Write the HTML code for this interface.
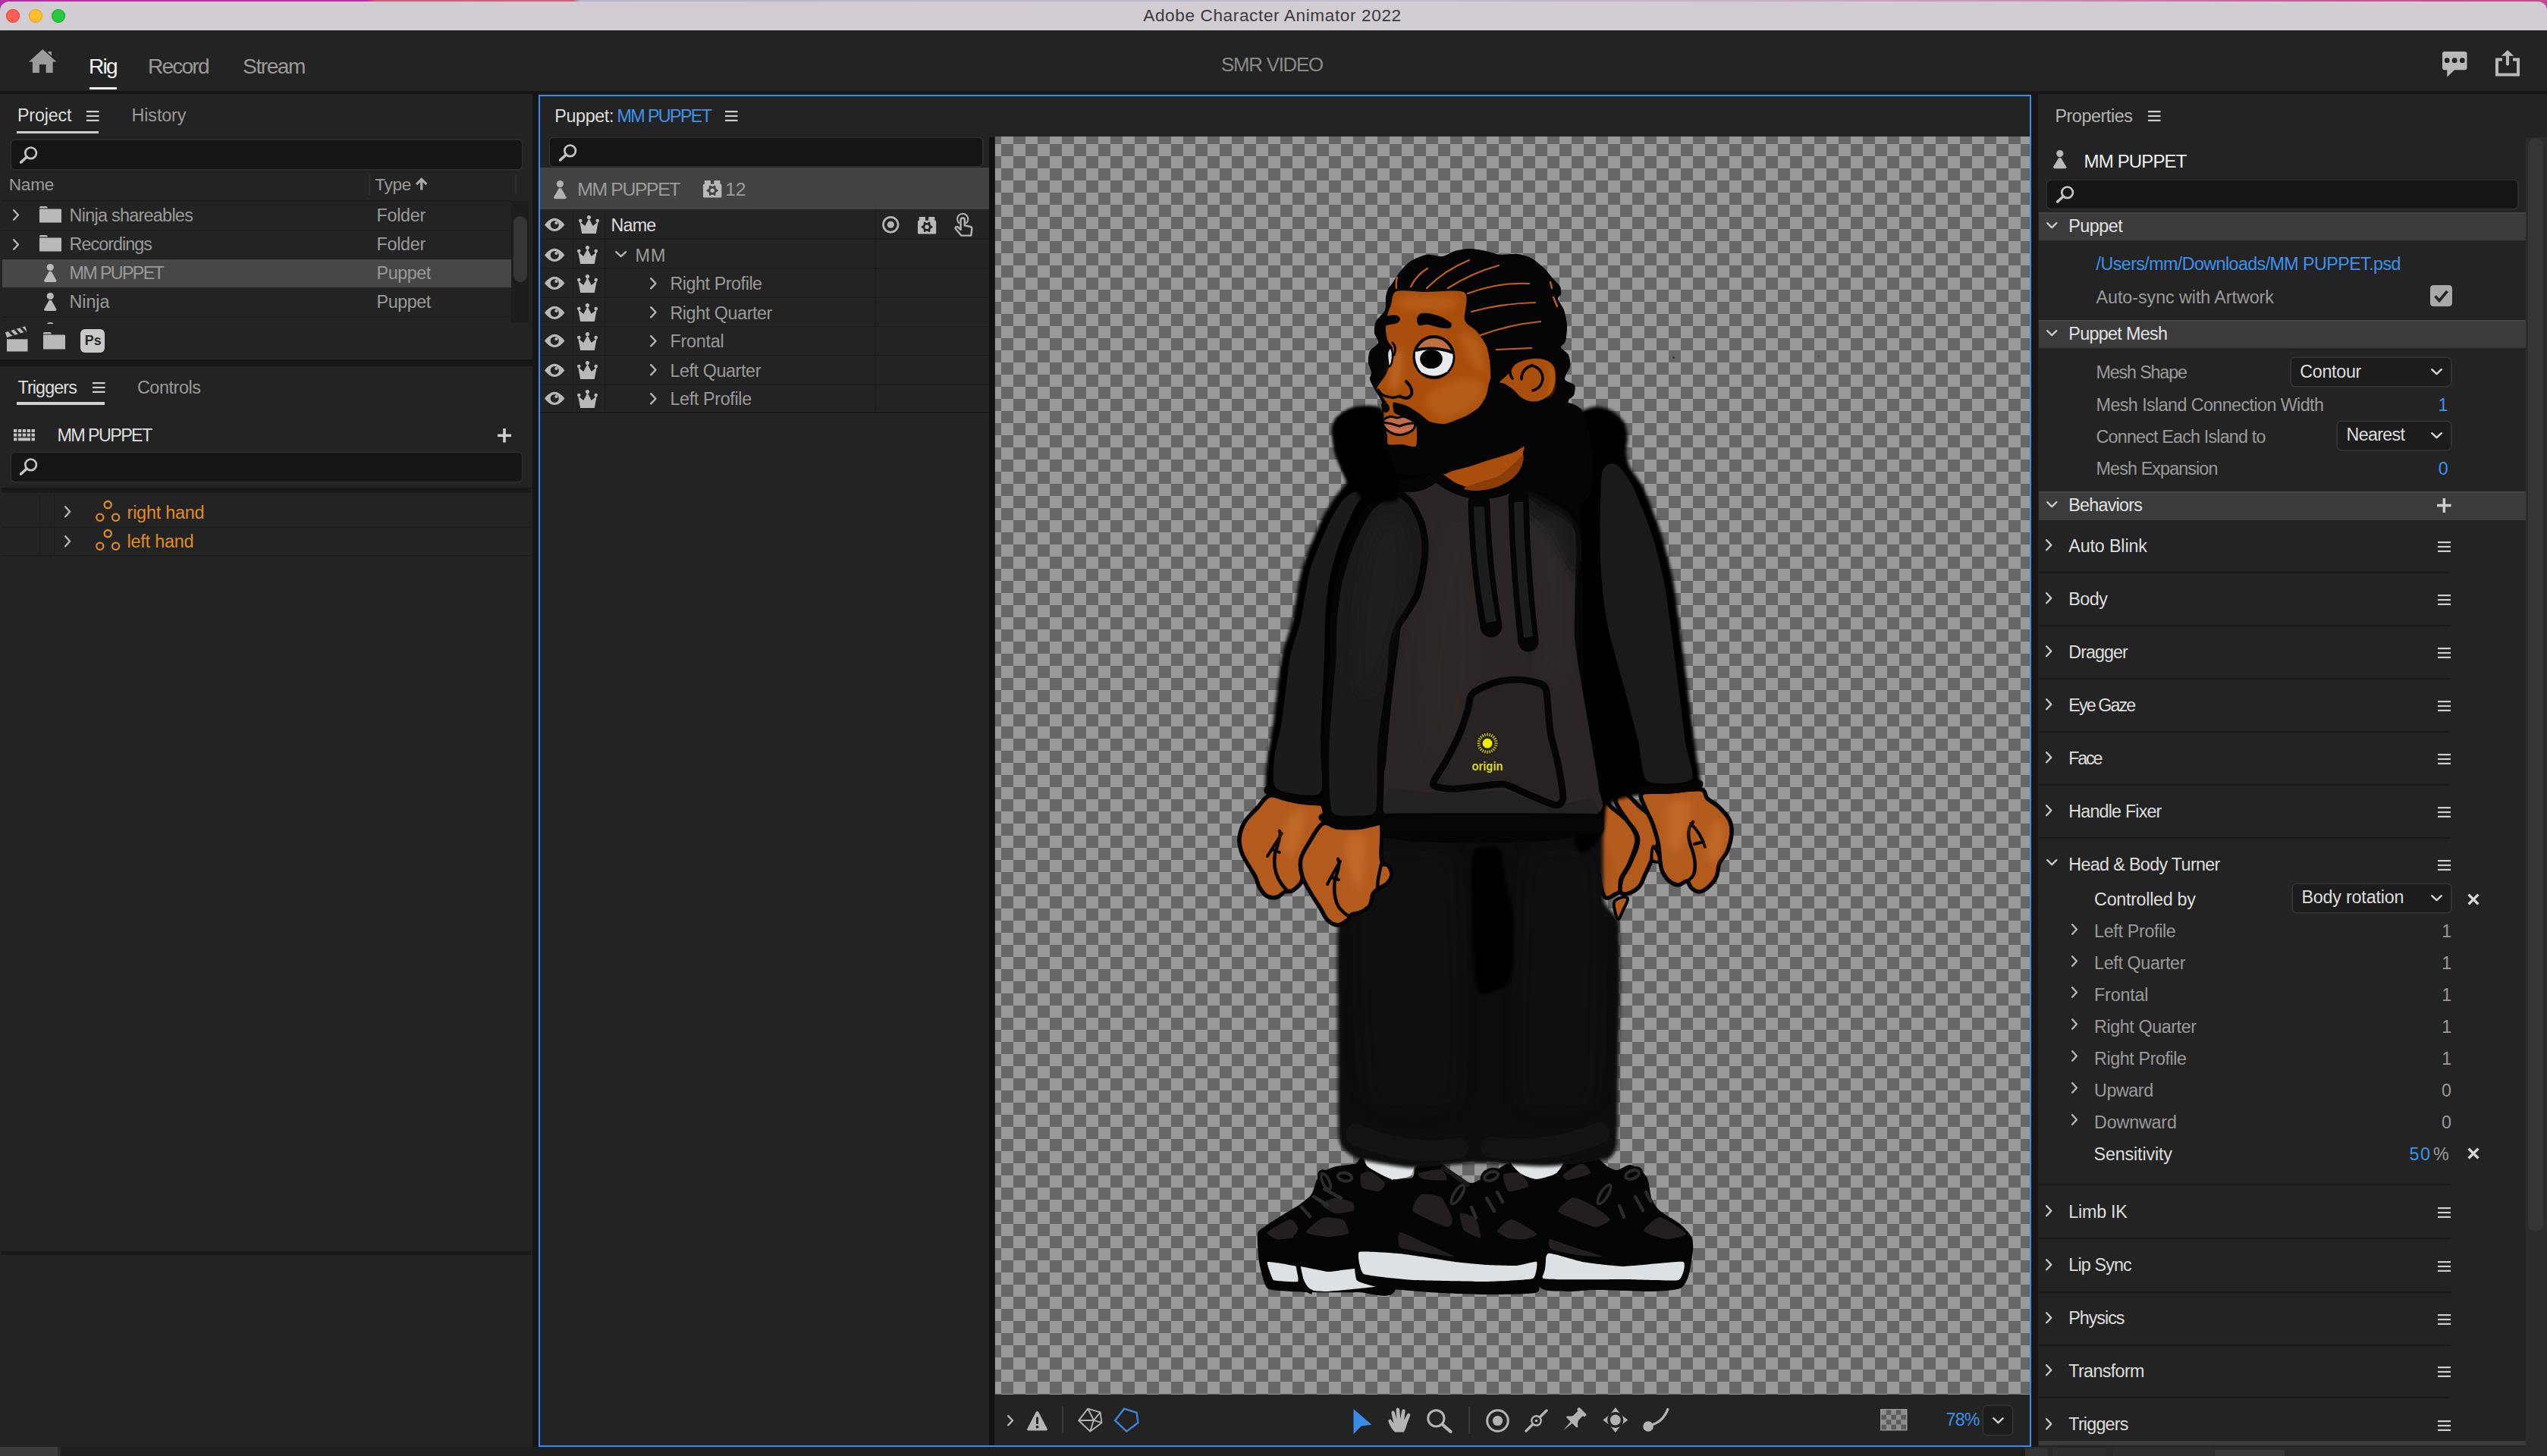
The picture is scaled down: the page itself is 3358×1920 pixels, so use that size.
<!DOCTYPE html><html><head><meta charset="utf-8"><title>Adobe Character Animator 2022</title><style>
html,body{margin:0;padding:0;background:#232323;overflow:hidden}
body{width:3358px;height:1920px;position:relative;font-family:"Liberation Sans", sans-serif;}
.t{position:absolute;white-space:nowrap;}
svg{overflow:visible}
</style></head><body>
<div style="position:absolute;left:0px;top:0px;width:3358px;height:16px;background:linear-gradient(90deg,#b030a0 0,#b432a2 14.4%,#c8607e 14.8%,#c86480 22.5%,#b6b6cc 22.8%,#c0bccc 55%,#c8b0c4 70%,#c890b4 80%,#c0609a 90%,#bc4c8c 100%);"></div>
<div style="position:absolute;left:0px;top:2px;width:3358px;height:38px;background:#d2cdd2;border-radius:12px 12px 0 0;"></div>
<div style="position:absolute;left:8px;top:12px;width:18px;height:18px;background:#fe5f57;border-radius:50%;box-shadow:inset 0 0 0 1px #e2463f;"></div>
<div style="position:absolute;left:37.8px;top:12px;width:18px;height:18px;background:#febc2e;border-radius:50%;box-shadow:inset 0 0 0 1px #dfa023;"></div>
<div style="position:absolute;left:68px;top:12px;width:18px;height:18px;background:#28c840;border-radius:50%;box-shadow:inset 0 0 0 1px #1aab29;"></div>
<div style="position:absolute;left:0px;top:40px;width:3358px;height:80px;background:#232323;"></div>
<div style="position:absolute;left:0px;top:119.5px;width:3358px;height:4.5px;background:#161616;"></div>
<svg style="position:absolute;left:37.5px;top:65px;" width="36.5" height="31" viewBox="0 0 36.5 31"><path d="M18.2 0 L36.5 16.5 L31.6 16.5 L31.6 31 L22.6 31 L22.6 20 L13.9 20 L13.9 31 L4.9 31 L4.9 16.5 L0 16.5 Z M25.5 3 L30 3 L30 8.5 L25.5 4.6Z" fill="#9c9c9c"/></svg>
<div style="position:absolute;left:118px;top:114.5px;width:36px;height:3px;background:#f0f0f0;"></div>
<svg style="position:absolute;left:3220px;top:68px;" width="32.5" height="33.5" viewBox="0 0 32.5 33.5"><path d="M3 0 H29.5 Q32.5 0 32.5 3 V21.3 Q32.5 24.3 29.5 24.3 H16 L6.3 33.5 V24.3 H3 Q0 24.3 0 21.3 V3 Q0 0 3 0Z" fill="#b9b9b9"/><circle cx="6.2" cy="11.7" r="3.4" fill="#232323"/><circle cx="16.2" cy="11.7" r="3.4" fill="#232323"/><circle cx="26.3" cy="11.7" r="3.4" fill="#232323"/></svg>
<svg style="position:absolute;left:3290px;top:66px;" width="32" height="34.5" viewBox="0 0 32 34.5"><path d="M9 12.5 H2 V32.4 H30 V12.5 H23" fill="none" stroke="#b9b9b9" stroke-width="4"/><path d="M16 0 L24.2 7.8 H18 V19 Q18 20.4 16 20.4 Q14 20.4 14 19 V7.8 H7.8Z" fill="#b9b9b9"/></svg>
<div style="position:absolute;left:0px;top:1908px;width:3358px;height:12px;background:#1e1e1e;"></div>
<div style="position:absolute;left:0px;top:1908px;width:76px;height:12px;background:#3d3d3d;"></div>
<div style="position:absolute;left:76px;top:1908px;width:4px;height:12px;background:#2c2c2c;"></div>
<div style="position:absolute;left:2670px;top:1908px;width:688px;height:12px;background:#2a2a2a;"></div>
<div style="position:absolute;left:2670px;top:1910px;width:30px;height:10px;background:#333;"></div>
<div style="position:absolute;left:2706px;top:1910px;width:70px;height:10px;background:#303030;"></div>
<div style="position:absolute;left:2786px;top:1910px;width:132px;height:10px;background:#2e2e2e;"></div>
<div style="position:absolute;left:2920px;top:1912px;width:92px;height:8px;background:#383838;"></div>
<div style="position:absolute;left:0px;top:124px;width:702px;height:350px;background:#232323;"></div>
<div style="position:absolute;left:0px;top:473.5px;width:702px;height:9px;background:#161616;"></div>
<div style="position:absolute;left:0px;top:482.5px;width:702px;height:1425.5px;background:#232323;border-radius:0 0 0 12px;"></div>
<div style="position:absolute;left:702px;top:124px;width:8px;height:1784px;background:#161616;"></div>
<svg style="position:absolute;left:113.6px;top:146px;" width="16.5" height="14" viewBox="0 0 16.5 14"><rect x="0" y="0" width="16.5" height="2.2" fill="#cfcfcf"/><rect x="0" y="5.9" width="16.5" height="2.2" fill="#cfcfcf"/><rect x="0" y="11.8" width="16.5" height="2.2" fill="#cfcfcf"/></svg>
<div style="position:absolute;left:22px;top:172.5px;width:108px;height:3.2px;background:#cfcfcf;"></div>
<div style="position:absolute;left:14.6px;top:185px;width:673px;height:38px;background:#151515;border-radius:5px;box-shadow:0 0 0 1.5px #2e2e2e;"></div>
<svg style="position:absolute;left:26.1px;top:192.5px;" width="23.5" height="22.5" viewBox="0 0 23.5 22.5"><circle cx="14.6" cy="8.8" r="7.3" fill="none" stroke="#c4c4c4" stroke-width="2.7"/><path d="M9.3 14 L1.6 21" stroke="#c4c4c4" stroke-width="3.6" stroke-linecap="round"/></svg>
<div style="position:absolute;left:486px;top:230px;width:1.5px;height:27px;background:#2f2f2f;"></div>
<div style="position:absolute;left:679px;top:230px;width:1.5px;height:27px;background:#2c2c2c;"></div>
<svg style="position:absolute;left:547.5px;top:234px;" width="15.5" height="16.5" viewBox="0 0 15.5 16.5"><path d="M7.75 0 L15.5 8 L13.3 10.2 L9.4 6.3 V16.5 H6.1 V6.3 L2.2 10.2 L0 8Z" fill="#a8a8a8"/></svg>
<div style="position:absolute;left:3px;top:264px;width:671px;height:1.5px;background:#1b1b1b;"></div>
<div style="position:absolute;left:3px;top:302.59999999999997px;width:671px;height:1.5px;background:#1c1c1c;"></div>
<svg style="position:absolute;left:51.5px;top:272.2px;" width="29" height="21.5" viewBox="0 0 29 21.5"><path d="M0 1.5 Q0 0 1.5 0 H9 Q10.5 0 10.5 1.5 V2.6 H0Z" fill="#b9b9b9"/><path d="M0 3.6 H27.8 Q29 3.6 29 4.8 V21.5 H0Z" fill="#b9b9b9"/></svg>
<svg style="position:absolute;left:16.5px;top:276.4px;" width="8.5" height="15" viewBox="0 0 8.5 15"><path d="M1.2 1.2 L7.0 7.5 L1.2 13.8" fill="none" stroke="#b5b5b5" stroke-width="2.4" stroke-linecap="round" stroke-linejoin="round"/></svg>
<div style="position:absolute;left:3px;top:340.74999999999994px;width:671px;height:1.5px;background:#1c1c1c;"></div>
<svg style="position:absolute;left:51.5px;top:310.34999999999997px;" width="29" height="21.5" viewBox="0 0 29 21.5"><path d="M0 1.5 Q0 0 1.5 0 H9 Q10.5 0 10.5 1.5 V2.6 H0Z" fill="#b9b9b9"/><path d="M0 3.6 H27.8 Q29 3.6 29 4.8 V21.5 H0Z" fill="#b9b9b9"/></svg>
<svg style="position:absolute;left:16.5px;top:314.54999999999995px;" width="8.5" height="15" viewBox="0 0 8.5 15"><path d="M1.2 1.2 L7.0 7.5 L1.2 13.8" fill="none" stroke="#b5b5b5" stroke-width="2.4" stroke-linecap="round" stroke-linejoin="round"/></svg>
<div style="position:absolute;left:3px;top:342.3px;width:671px;height:36.4px;background:#474747;"></div>
<svg style="position:absolute;left:58px;top:348.2px;" width="16.5" height="24" viewBox="0 0 16.5 24"><circle cx="8.25" cy="4.5600000000000005" r="4.5600000000000005" fill="#b9b9b9"/><path d="M6.65 10.08 H9.85 L16.5 22 Q16.5 24 14.5 24 H2 Q0 24 0 22Z" fill="#b9b9b9"/></svg>
<div style="position:absolute;left:3px;top:417.04999999999995px;width:671px;height:1.5px;background:#1c1c1c;"></div>
<svg style="position:absolute;left:58px;top:386.34999999999997px;" width="16.5" height="24" viewBox="0 0 16.5 24"><circle cx="8.25" cy="4.5600000000000005" r="4.5600000000000005" fill="#b9b9b9"/><path d="M6.65 10.08 H9.85 L16.5 22 Q16.5 24 14.5 24 H2 Q0 24 0 22Z" fill="#b9b9b9"/></svg>
<svg style="position:absolute;left:62px;top:424.6px;overflow:hidden" width="8.5" height="2" viewBox="0 0 8.5 2"><ellipse cx="4.25" cy="2.4" rx="4.2" ry="2.4" fill="#b9b9b9"/></svg>
<div style="position:absolute;left:674px;top:265px;width:23px;height:161px;background:#1d1d1d;"></div>
<div style="position:absolute;left:677px;top:285px;width:18px;height:87px;background:#363636;border-radius:9px;"></div>
<svg style="position:absolute;left:9px;top:434px;" width="27.5" height="29.5" viewBox="0 0 27.5 29.5"><path d="M0 13.3 H27.5 V29.5 H0Z" fill="#b9b9b9"/><g transform="rotate(-17 0 11)"><path d="M0 4 H27.5 V11 H0Z" fill="#b9b9b9"/><path d="M4 4 L7.5 4 L11 11 L7.5 11Z M12 4 L15.5 4 L19 11 L15.5 11Z M20 4 L23.5 4 L27 11 L23.5 11Z" fill="#232323"/></g></svg>
<svg style="position:absolute;left:57.4px;top:437.5px;" width="29" height="22.5" viewBox="0 0 29 22.5"><path d="M0 1.5 Q0 0 1.5 0 H9 Q10.5 0 10.5 1.5 V2.6 H0Z" fill="#b9b9b9"/><path d="M0 3.6 H27.8 Q29 3.6 29 4.8 V22.5 H0Z" fill="#b9b9b9"/></svg>
<div style="position:absolute;left:106px;top:434px;width:32px;height:31px;background:#c9c9c9;border-radius:6px;"></div>
<svg style="position:absolute;left:121.6px;top:504px;" width="16.5" height="14" viewBox="0 0 16.5 14"><rect x="0" y="0" width="16.5" height="2.2" fill="#cfcfcf"/><rect x="0" y="5.9" width="16.5" height="2.2" fill="#cfcfcf"/><rect x="0" y="11.8" width="16.5" height="2.2" fill="#cfcfcf"/></svg>
<div style="position:absolute;left:22px;top:530.3px;width:116px;height:3.4px;background:#cfcfcf;"></div>
<svg style="position:absolute;left:17.8px;top:566.3px;" width="28" height="15.5" viewBox="0 0 28 15.5"><rect x="0.0" y="0" width="4.3" height="4" fill="#c4c4c4"/><rect x="0.0" y="5.6" width="4.3" height="4" fill="#c4c4c4"/><rect x="5.9" y="0" width="4.3" height="4" fill="#c4c4c4"/><rect x="5.9" y="5.6" width="4.3" height="4" fill="#c4c4c4"/><rect x="11.8" y="0" width="4.3" height="4" fill="#c4c4c4"/><rect x="11.8" y="5.6" width="4.3" height="4" fill="#c4c4c4"/><rect x="17.700000000000003" y="0" width="4.3" height="4" fill="#c4c4c4"/><rect x="17.700000000000003" y="5.6" width="4.3" height="4" fill="#c4c4c4"/><rect x="23.6" y="0" width="4.3" height="4" fill="#c4c4c4"/><rect x="23.6" y="5.6" width="4.3" height="4" fill="#c4c4c4"/><rect x="0" y="11.3" width="4.3" height="4" fill="#c4c4c4"/><rect x="5.9" y="11.3" width="16.1" height="4" fill="#c4c4c4"/><rect x="23.6" y="11.3" width="4.3" height="4" fill="#c4c4c4"/></svg>
<svg style="position:absolute;left:655.5px;top:565px;" width="18" height="18.5" viewBox="0 0 18 18.5"><path d="M7.2 0 H10.8 V7.4 H18 V11 H10.8 V18.5 H7.2 V11 H0 V7.4 H7.2Z" fill="#d0d0d0"/></svg>
<div style="position:absolute;left:14.7px;top:596.5px;width:673px;height:38px;background:#151515;border-radius:5px;box-shadow:0 0 0 1.5px #2e2e2e;"></div>
<svg style="position:absolute;left:26.2px;top:604.0px;" width="23.5" height="22.5" viewBox="0 0 23.5 22.5"><circle cx="14.6" cy="8.8" r="7.3" fill="none" stroke="#c4c4c4" stroke-width="2.7"/><path d="M9.3 14 L1.6 21" stroke="#c4c4c4" stroke-width="3.6" stroke-linecap="round"/></svg>
<div style="position:absolute;left:2px;top:643px;width:698px;height:6.5px;background:#1a1a1a;"></div>
<div style="position:absolute;left:2px;top:694.0px;width:696px;height:1.5px;background:#1c1c1c;"></div>
<svg style="position:absolute;left:85px;top:667.4px;" width="8.5" height="15.5" viewBox="0 0 8.5 15.5"><path d="M1.2 1.2 L7.0 7.75 L1.2 14.3" fill="none" stroke="#b5b5b5" stroke-width="2.4" stroke-linecap="round" stroke-linejoin="round"/></svg>
<svg style="position:absolute;left:125.8px;top:659.9px;" width="32.5" height="28.5" viewBox="0 0 32.5 28.5"><circle cx="16.2" cy="5.6" r="4.6" fill="none" stroke="#d98a2b" stroke-width="2.3"/><circle cx="5.8" cy="22.2" r="4.6" fill="none" stroke="#d98a2b" stroke-width="2.3"/><circle cx="26.6" cy="22.2" r="4.6" fill="none" stroke="#d98a2b" stroke-width="2.3"/></svg>
<div style="position:absolute;left:2px;top:732.15px;width:696px;height:1.5px;background:#1c1c1c;"></div>
<svg style="position:absolute;left:85px;top:705.55px;" width="8.5" height="15.5" viewBox="0 0 8.5 15.5"><path d="M1.2 1.2 L7.0 7.75 L1.2 14.3" fill="none" stroke="#b5b5b5" stroke-width="2.4" stroke-linecap="round" stroke-linejoin="round"/></svg>
<svg style="position:absolute;left:125.8px;top:698.05px;" width="32.5" height="28.5" viewBox="0 0 32.5 28.5"><circle cx="16.2" cy="5.6" r="4.6" fill="none" stroke="#d98a2b" stroke-width="2.3"/><circle cx="5.8" cy="22.2" r="4.6" fill="none" stroke="#d98a2b" stroke-width="2.3"/><circle cx="26.6" cy="22.2" r="4.6" fill="none" stroke="#d98a2b" stroke-width="2.3"/></svg>
<div style="position:absolute;left:52px;top:652px;width:1.2px;height:80px;background:#1d1d1d;"></div>
<div style="position:absolute;left:70.5px;top:652px;width:1.2px;height:80px;background:#1d1d1d;"></div>
<div style="position:absolute;left:2px;top:1650px;width:698px;height:5px;background:#1a1a1a;"></div>
<div style="position:absolute;left:710px;top:124.5px;width:1968px;height:1783.5px;background:#232323;box-sizing:border-box;border:2.4px solid #3b8ce6;"></div>
<svg style="position:absolute;left:955.7px;top:146.2px;" width="16.5" height="14" viewBox="0 0 16.5 14"><rect x="0" y="0" width="16.5" height="2.2" fill="#cfcfcf"/><rect x="0" y="5.9" width="16.5" height="2.2" fill="#cfcfcf"/><rect x="0" y="11.8" width="16.5" height="2.2" fill="#cfcfcf"/></svg>
<div style="position:absolute;left:725px;top:182px;width:569.5px;height:36.6px;background:#151515;border-radius:5px;box-shadow:0 0 0 1.5px #2e2e2e;"></div>
<svg style="position:absolute;left:736.5px;top:189.5px;" width="23.5" height="22.5" viewBox="0 0 23.5 22.5"><circle cx="14.6" cy="8.8" r="7.3" fill="none" stroke="#c4c4c4" stroke-width="2.7"/><path d="M9.3 14 L1.6 21" stroke="#c4c4c4" stroke-width="3.6" stroke-linecap="round"/></svg>
<div style="position:absolute;left:712.4px;top:220.6px;width:591.5999999999999px;height:55.6px;background:#434343;"></div>
<div style="position:absolute;left:1304px;top:181px;width:6.5px;height:1724.5px;background:#101010;"></div>
<svg style="position:absolute;left:729.7px;top:238px;" width="16.8" height="24.2" viewBox="0 0 16.8 24.2"><circle cx="8.4" cy="4.598" r="4.598" fill="#b2b2b2"/><path d="M6.800000000000001 10.164 H10.0 L16.8 22.2 Q16.8 24.2 14.8 24.2 H2 Q0 24.2 0 22.2Z" fill="#b2b2b2"/></svg>
<svg style="position:absolute;left:926.7px;top:238.2px;" width="24.4" height="22.6" viewBox="0 0 24.4 22.6"><path d="M1.9 0 H10.0 V4.7 H14.399999999999999 V0 H22.5 V4.7 H23.2 Q24.4 4.7 24.4 5.9 V21.200000000000003 Q24.4 22.6 23.0 22.6 H1.4 Q0 22.6 0 21.200000000000003 V5.9 Q0 4.7 1.2 4.7 H1.9Z" fill="#b9b9b9"/><polygon points="19.10,13.22 15.92,15.37 15.65,19.20 12.20,17.52 8.75,19.20 8.48,15.37 5.30,13.22 8.48,11.07 8.75,7.25 12.20,8.92 15.65,7.25 15.92,11.07" fill="#434343" stroke="#434343" stroke-width="1.6" stroke-linejoin="round"/><circle cx="12.2" cy="13.221" r="2.7" fill="#b9b9b9"/></svg>
<div style="position:absolute;left:712.4px;top:314.4px;width:591.6px;height:1.6px;background:#1c1c1c;"></div>
<svg style="position:absolute;left:717.8px;top:287.6px;" width="26.4" height="16.8" viewBox="0 0 26.4 16.8"><path d="M0 8.4 Q13.2 -8.736 26.4 8.4 Q13.2 25.536 0 8.4Z" fill="#b9b9b9"/><circle cx="13.2" cy="8.4" r="5.5" fill="#232323"/><circle cx="15.399999999999999" cy="6.0" r="2.1" fill="#b9b9b9"/></svg>
<svg style="position:absolute;left:763px;top:284px;" width="26.6" height="24" viewBox="0 0 26.6 24"><path d="M4.2 24 L1.2 8 L8.3 14 L13.5 4 L18.7 14 L25.8 8 L22.8 24Z" fill="#b9b9b9"/><circle cx="13.5" cy="2.6" r="2.6" fill="#b9b9b9"/><circle cx="2.3" cy="7" r="2.3" fill="#b9b9b9"/><circle cx="24.7" cy="7" r="2.3" fill="#b9b9b9"/></svg>
<div style="position:absolute;left:712.4px;top:353.4px;width:591.6px;height:1.6px;background:#1c1c1c;"></div>
<svg style="position:absolute;left:717.8px;top:327.6px;" width="26.4" height="16.8" viewBox="0 0 26.4 16.8"><path d="M0 8.4 Q13.2 -8.736 26.4 8.4 Q13.2 25.536 0 8.4Z" fill="#b9b9b9"/><circle cx="13.2" cy="8.4" r="5.5" fill="#232323"/><circle cx="15.399999999999999" cy="6.0" r="2.1" fill="#b9b9b9"/></svg>
<svg style="position:absolute;left:760.8px;top:324px;" width="26.6" height="24" viewBox="0 0 26.6 24"><path d="M4.2 24 L1.2 8 L8.3 14 L13.5 4 L18.7 14 L25.8 8 L22.8 24Z" fill="#b9b9b9"/><circle cx="13.5" cy="2.6" r="2.6" fill="#b9b9b9"/><circle cx="2.3" cy="7" r="2.3" fill="#b9b9b9"/><circle cx="24.7" cy="7" r="2.3" fill="#b9b9b9"/></svg>
<svg style="position:absolute;left:811.4px;top:331.4px;" width="15.4" height="8.6" viewBox="0 0 15.4 8.6"><path d="M1.2 1.2 L7.7 7.1 L14.200000000000001 1.2" fill="none" stroke="#b5b5b5" stroke-width="2.4" stroke-linecap="round" stroke-linejoin="round"/></svg>
<div style="position:absolute;left:712.4px;top:391.7px;width:591.6px;height:1.6px;background:#1c1c1c;"></div>
<svg style="position:absolute;left:717.8px;top:365.40000000000003px;" width="26.4" height="16.8" viewBox="0 0 26.4 16.8"><path d="M0 8.4 Q13.2 -8.736 26.4 8.4 Q13.2 25.536 0 8.4Z" fill="#b9b9b9"/><circle cx="13.2" cy="8.4" r="5.5" fill="#232323"/><circle cx="15.399999999999999" cy="6.0" r="2.1" fill="#b9b9b9"/></svg>
<svg style="position:absolute;left:760.8px;top:361.8px;" width="26.6" height="24" viewBox="0 0 26.6 24"><path d="M4.2 24 L1.2 8 L8.3 14 L13.5 4 L18.7 14 L25.8 8 L22.8 24Z" fill="#b9b9b9"/><circle cx="13.5" cy="2.6" r="2.6" fill="#b9b9b9"/><circle cx="2.3" cy="7" r="2.3" fill="#b9b9b9"/><circle cx="24.7" cy="7" r="2.3" fill="#b9b9b9"/></svg>
<svg style="position:absolute;left:856.6px;top:366.2px;" width="9" height="15.5" viewBox="0 0 9 15.5"><path d="M1.2 1.2 L7.5 7.75 L1.2 14.3" fill="none" stroke="#b5b5b5" stroke-width="2.4" stroke-linecap="round" stroke-linejoin="round"/></svg>
<div style="position:absolute;left:712.4px;top:429.8px;width:591.6px;height:1.6px;background:#1c1c1c;"></div>
<svg style="position:absolute;left:717.8px;top:403.5px;" width="26.4" height="16.8" viewBox="0 0 26.4 16.8"><path d="M0 8.4 Q13.2 -8.736 26.4 8.4 Q13.2 25.536 0 8.4Z" fill="#b9b9b9"/><circle cx="13.2" cy="8.4" r="5.5" fill="#232323"/><circle cx="15.399999999999999" cy="6.0" r="2.1" fill="#b9b9b9"/></svg>
<svg style="position:absolute;left:760.8px;top:399.9px;" width="26.6" height="24" viewBox="0 0 26.6 24"><path d="M4.2 24 L1.2 8 L8.3 14 L13.5 4 L18.7 14 L25.8 8 L22.8 24Z" fill="#b9b9b9"/><circle cx="13.5" cy="2.6" r="2.6" fill="#b9b9b9"/><circle cx="2.3" cy="7" r="2.3" fill="#b9b9b9"/><circle cx="24.7" cy="7" r="2.3" fill="#b9b9b9"/></svg>
<svg style="position:absolute;left:856.6px;top:404.29999999999995px;" width="9" height="15.5" viewBox="0 0 9 15.5"><path d="M1.2 1.2 L7.5 7.75 L1.2 14.3" fill="none" stroke="#b5b5b5" stroke-width="2.4" stroke-linecap="round" stroke-linejoin="round"/></svg>
<div style="position:absolute;left:712.4px;top:467.9px;width:591.6px;height:1.6px;background:#1c1c1c;"></div>
<svg style="position:absolute;left:717.8px;top:441.40000000000003px;" width="26.4" height="16.8" viewBox="0 0 26.4 16.8"><path d="M0 8.4 Q13.2 -8.736 26.4 8.4 Q13.2 25.536 0 8.4Z" fill="#b9b9b9"/><circle cx="13.2" cy="8.4" r="5.5" fill="#232323"/><circle cx="15.399999999999999" cy="6.0" r="2.1" fill="#b9b9b9"/></svg>
<svg style="position:absolute;left:760.8px;top:437.8px;" width="26.6" height="24" viewBox="0 0 26.6 24"><path d="M4.2 24 L1.2 8 L8.3 14 L13.5 4 L18.7 14 L25.8 8 L22.8 24Z" fill="#b9b9b9"/><circle cx="13.5" cy="2.6" r="2.6" fill="#b9b9b9"/><circle cx="2.3" cy="7" r="2.3" fill="#b9b9b9"/><circle cx="24.7" cy="7" r="2.3" fill="#b9b9b9"/></svg>
<svg style="position:absolute;left:856.6px;top:442.2px;" width="9" height="15.5" viewBox="0 0 9 15.5"><path d="M1.2 1.2 L7.5 7.75 L1.2 14.3" fill="none" stroke="#b5b5b5" stroke-width="2.4" stroke-linecap="round" stroke-linejoin="round"/></svg>
<div style="position:absolute;left:712.4px;top:506.09999999999997px;width:591.6px;height:1.6px;background:#1c1c1c;"></div>
<svg style="position:absolute;left:717.8px;top:479.5px;" width="26.4" height="16.8" viewBox="0 0 26.4 16.8"><path d="M0 8.4 Q13.2 -8.736 26.4 8.4 Q13.2 25.536 0 8.4Z" fill="#b9b9b9"/><circle cx="13.2" cy="8.4" r="5.5" fill="#232323"/><circle cx="15.399999999999999" cy="6.0" r="2.1" fill="#b9b9b9"/></svg>
<svg style="position:absolute;left:760.8px;top:475.9px;" width="26.6" height="24" viewBox="0 0 26.6 24"><path d="M4.2 24 L1.2 8 L8.3 14 L13.5 4 L18.7 14 L25.8 8 L22.8 24Z" fill="#b9b9b9"/><circle cx="13.5" cy="2.6" r="2.6" fill="#b9b9b9"/><circle cx="2.3" cy="7" r="2.3" fill="#b9b9b9"/><circle cx="24.7" cy="7" r="2.3" fill="#b9b9b9"/></svg>
<svg style="position:absolute;left:856.6px;top:480.29999999999995px;" width="9" height="15.5" viewBox="0 0 9 15.5"><path d="M1.2 1.2 L7.5 7.75 L1.2 14.3" fill="none" stroke="#b5b5b5" stroke-width="2.4" stroke-linecap="round" stroke-linejoin="round"/></svg>
<div style="position:absolute;left:712.4px;top:543.2px;width:591.6px;height:1.6px;background:#1c1c1c;"></div>
<svg style="position:absolute;left:717.8px;top:517.4px;" width="26.4" height="16.8" viewBox="0 0 26.4 16.8"><path d="M0 8.4 Q13.2 -8.736 26.4 8.4 Q13.2 25.536 0 8.4Z" fill="#b9b9b9"/><circle cx="13.2" cy="8.4" r="5.5" fill="#232323"/><circle cx="15.399999999999999" cy="6.0" r="2.1" fill="#b9b9b9"/></svg>
<svg style="position:absolute;left:760.8px;top:513.8px;" width="26.6" height="24" viewBox="0 0 26.6 24"><path d="M4.2 24 L1.2 8 L8.3 14 L13.5 4 L18.7 14 L25.8 8 L22.8 24Z" fill="#b9b9b9"/><circle cx="13.5" cy="2.6" r="2.6" fill="#b9b9b9"/><circle cx="2.3" cy="7" r="2.3" fill="#b9b9b9"/><circle cx="24.7" cy="7" r="2.3" fill="#b9b9b9"/></svg>
<svg style="position:absolute;left:856.6px;top:518.1999999999999px;" width="9" height="15.5" viewBox="0 0 9 15.5"><path d="M1.2 1.2 L7.5 7.75 L1.2 14.3" fill="none" stroke="#b5b5b5" stroke-width="2.4" stroke-linecap="round" stroke-linejoin="round"/></svg>
<div style="position:absolute;left:754.5px;top:277px;width:1.5px;height:267px;background:#1d1d1d;"></div>
<div style="position:absolute;left:796.5px;top:277px;width:1.5px;height:267px;background:#1d1d1d;"></div>
<div style="position:absolute;left:1153px;top:277px;width:1.5px;height:267px;background:#1d1d1d;"></div>
<svg style="position:absolute;left:1162.7px;top:284.8px;" width="22.5" height="22.5" viewBox="0 0 22.5 22.5"><circle cx="11.25" cy="11.25" r="9.8" fill="none" stroke="#b4b4b4" stroke-width="2.7"/><circle cx="11.25" cy="11.25" r="4.6" fill="#b4b4b4"/></svg>
<svg style="position:absolute;left:1209.8px;top:286px;" width="24.2" height="22.6" viewBox="0 0 24.2 22.6"><path d="M1.9 0 H10.0 V4.7 H14.2 V0 H22.3 V4.7 H23.0 Q24.2 4.7 24.2 5.9 V21.200000000000003 Q24.2 22.6 22.8 22.6 H1.4 Q0 22.6 0 21.200000000000003 V5.9 Q0 4.7 1.2 4.7 H1.9Z" fill="#b9b9b9"/><polygon points="19.00,13.22 15.82,15.37 15.55,19.20 12.10,17.52 8.65,19.20 8.38,15.37 5.20,13.22 8.38,11.07 8.65,7.25 12.10,8.92 15.55,7.25 15.82,11.07" fill="#232323" stroke="#232323" stroke-width="1.6" stroke-linejoin="round"/><circle cx="12.1" cy="13.221" r="2.7" fill="#b9b9b9"/></svg>
<svg style="position:absolute;left:1257.5px;top:281.4px;" width="24.6" height="31" viewBox="0 0 24.6 31"><path d="M8.6 16 V9 Q8.6 6.5 11.2 6.5 Q13.8 6.5 13.8 9 V16.4 L20.8 17.8 Q23.6 18.4 23.3 21 L22.3 29.6 H9.2 L2 20.8 Q1 19.2 2.6 18.2 Q4.2 17.4 5.4 18.8 L8.6 22Z" fill="none" stroke="#b4b4b4" stroke-width="2.4" stroke-linejoin="round"/><path d="M7.0 13.6 A7.1 7.1 0 1 1 15.4 13.6" fill="none" stroke="#b4b4b4" stroke-width="2.1"/></svg>
<div style="position:absolute;left:1312px;top:180px;width:1364px;height:1659px;background-color:#666;background-image:conic-gradient(#9a9a9a 25%,#666 0 50%,#9a9a9a 0 75%,#666 0);background-size:32px 32px;background-position:-8px -6px;"></div>
<svg style="position:absolute;left:1312px;top:180px;overflow:hidden" width="1364" height="1659" viewBox="1312 180 1364 1659"><defs><filter id="bl2" x="-10%" y="-10%" width="120%" height="120%"><feGaussianBlur stdDeviation="2.2"/></filter><filter id="bl5" x="-20%" y="-20%" width="140%" height="140%"><feGaussianBlur stdDeviation="5"/></filter><filter id="bl10" x="-30%" y="-30%" width="160%" height="160%"><feGaussianBlur stdDeviation="10"/></filter></defs>
<path d="M2114.0 1058.0 C2117.3 1048.8 2120.2 1061.3 2125.0 1065.0 C2129.8 1068.7 2137.8 1074.3 2143.0 1080.0 C2148.2 1085.7 2153.7 1093.3 2156.0 1099.0 C2158.3 1104.7 2158.5 1107.0 2157.0 1114.0 C2155.5 1121.0 2150.3 1133.5 2147.0 1141.0 C2143.7 1148.5 2138.8 1153.5 2137.0 1159.0 C2135.2 1164.5 2137.2 1170.7 2136.0 1174.0 C2134.8 1177.3 2133.7 1178.0 2130.0 1179.0 C2126.3 1180.0 2118.2 1189.8 2114.0 1180.0 C2109.8 1170.2 2105.0 1140.3 2105.0 1120.0 C2105.0 1099.7 2110.7 1067.2 2114.0 1058.0Z" fill="#b35a1d" stroke="#050505" stroke-width="5.5" stroke-linejoin="round" stroke-linecap="round" />
<path d="M2140.0 1183.0 C2143.0 1182.3 2146.0 1183.2 2146.0 1186.0 C2146.0 1188.8 2142.2 1195.7 2140.0 1200.0 C2137.8 1204.3 2135.0 1213.7 2133.0 1212.0 C2131.0 1210.3 2126.8 1194.8 2128.0 1190.0 C2129.2 1185.2 2137.0 1183.7 2140.0 1183.0Z" fill="#b35a1d" stroke="#050505" stroke-width="4" stroke-linejoin="round" stroke-linecap="round" />
<path d="M2130.0 1056.0 C2129.3 1050.0 2137.0 1045.0 2140.0 1044.0 C2143.0 1043.0 2144.3 1046.7 2148.0 1050.0 C2151.7 1053.3 2157.2 1059.5 2162.0 1064.0 C2166.8 1068.5 2173.3 1072.3 2177.0 1077.0 C2180.7 1081.7 2182.5 1086.3 2184.0 1092.0 C2185.5 1097.7 2187.0 1104.2 2186.0 1111.0 C2185.0 1117.8 2180.8 1126.0 2178.0 1133.0 C2175.2 1140.0 2171.7 1147.2 2169.0 1153.0 C2166.3 1158.8 2165.2 1164.0 2162.0 1168.0 C2158.8 1172.0 2154.2 1175.5 2150.0 1177.0 C2145.8 1178.5 2139.0 1180.0 2137.0 1177.0 C2135.0 1174.0 2136.2 1165.0 2138.0 1159.0 C2139.8 1153.0 2144.5 1148.5 2148.0 1141.0 C2151.5 1133.5 2157.5 1121.2 2159.0 1114.0 C2160.5 1106.8 2159.5 1103.7 2157.0 1098.0 C2154.5 1092.3 2148.5 1087.0 2144.0 1080.0 C2139.5 1073.0 2130.7 1062.0 2130.0 1056.0Z" fill="#b35a1d" stroke="#050505" stroke-width="5.5" stroke-linejoin="round" stroke-linecap="round" />
<path d="M2180.0 1116.0 C2181.8 1116.2 2189.3 1132.0 2189.0 1135.0 C2188.7 1138.0 2179.5 1137.2 2178.0 1134.0 C2176.5 1130.8 2178.2 1115.8 2180.0 1116.0Z" fill="#b35a1d" stroke="#050505" stroke-width="4" stroke-linejoin="round" stroke-linecap="round" />
<path d="M1658.0 1627.0 C1658.9 1621.5 1663.6 1620.3 1668.0 1617.0 C1672.4 1613.7 1690.6 1602.4 1696.0 1599.0 C1701.4 1595.6 1710.2 1590.8 1714.0 1588.0 C1717.8 1585.2 1726.4 1578.7 1729.0 1575.0 C1731.6 1571.3 1734.2 1559.5 1736.0 1556.0 C1737.8 1552.5 1741.0 1547.1 1744.0 1545.0 C1747.0 1542.9 1756.9 1539.3 1762.0 1538.0 C1767.1 1536.7 1784.0 1535.9 1788.0 1534.0 C1792.0 1532.1 1794.2 1521.5 1796.0 1522.0 C1797.8 1522.5 1798.5 1534.0 1803.0 1538.0 C1807.5 1542.0 1830.7 1537.1 1835.0 1556.0 C1839.3 1574.9 1845.2 1682.7 1840.0 1700.0 C1834.8 1717.3 1803.5 1703.5 1790.0 1704.0 C1776.5 1704.5 1737.2 1704.3 1724.0 1704.0 C1710.8 1703.7 1683.5 1702.2 1677.0 1701.0 C1670.5 1699.8 1670.0 1698.3 1668.0 1694.0 C1666.0 1689.7 1661.2 1671.8 1660.0 1664.0 C1658.8 1656.2 1657.1 1632.5 1658.0 1627.0Z" fill="#050505" />
<path d="M1671.0 1625.0 C1672.8 1622.4 1697.0 1608.6 1701.0 1608.0 C1705.0 1607.4 1710.6 1616.6 1711.0 1619.0 C1711.4 1621.4 1707.8 1630.5 1705.0 1632.0 C1702.2 1633.5 1686.4 1634.7 1683.0 1634.0 C1679.6 1633.3 1669.2 1627.6 1671.0 1625.0Z" fill="#231f1e" />
<path d="M1671.0 1664.0 C1672.5 1663.1 1707.0 1668.7 1709.0 1670.0 C1711.0 1671.3 1712.5 1689.1 1711.0 1690.0 C1709.5 1690.9 1681.0 1689.3 1679.0 1688.0 C1677.0 1686.7 1669.5 1664.9 1671.0 1664.0Z" fill="#dde1e4" />
<path d="M1722.0 1625.0 C1721.3 1622.5 1739.2 1607.7 1744.0 1606.0 C1748.8 1604.3 1766.7 1606.6 1770.0 1608.0 C1773.3 1609.4 1776.3 1618.1 1777.0 1620.0 C1777.7 1621.9 1779.6 1625.9 1777.0 1627.0 C1774.4 1628.1 1756.5 1631.2 1751.0 1631.0 C1745.5 1630.8 1722.7 1627.5 1722.0 1625.0Z" fill="#231f1e" />
<path d="M1794.0 1549.0 C1795.1 1546.9 1803.8 1543.9 1807.0 1545.0 C1810.2 1546.1 1824.9 1557.4 1826.0 1560.0 C1827.1 1562.6 1821.0 1570.4 1818.0 1571.0 C1815.0 1571.6 1798.4 1568.2 1796.0 1566.0 C1793.6 1563.8 1792.9 1551.1 1794.0 1549.0Z" fill="#231f1e" />
<path d="M1742.0 1588.0 C1742.0 1586.0 1756.0 1580.3 1760.0 1580.0 C1764.0 1579.7 1779.4 1583.4 1782.0 1585.0 C1784.6 1586.6 1788.2 1594.5 1786.0 1596.0 C1783.8 1597.5 1764.4 1600.8 1760.0 1600.0 C1755.6 1599.2 1742.0 1590.0 1742.0 1588.0Z" fill="#231f1e" />
<path d="M1713.0 1670.0 C1715.2 1669.4 1746.1 1676.8 1751.0 1677.0 C1755.9 1677.2 1784.5 1672.3 1787.0 1673.0 C1789.5 1673.7 1786.9 1686.5 1789.0 1688.0 C1791.1 1689.5 1820.5 1695.0 1818.0 1696.0 C1815.5 1697.0 1757.1 1702.7 1751.0 1703.0 C1744.9 1703.3 1729.2 1702.1 1727.0 1701.0 C1724.8 1699.9 1718.9 1688.1 1718.0 1686.0 C1717.1 1683.9 1710.8 1670.6 1713.0 1670.0Z" fill="#dde1e4" />
<path d="M1709 1628 Q1708 1660 1716 1690 Q1722 1702 1730 1704" fill="none" stroke="#050505" stroke-width="6"/>
<ellipse cx="1748" cy="1558" rx="8" ry="15" transform="rotate(-25 1748 1558)" fill="#2b2b2b" stroke="#050505" stroke-width="3.2"/>
<ellipse cx="1748" cy="1558" rx="2.4000000000000004" ry="9.2" transform="rotate(-25 1748 1558)" fill="#050505"/>
<ellipse cx="1773" cy="1552" rx="13" ry="9" transform="rotate(10 1773 1552)" fill="#2b2b2b" stroke="#050505" stroke-width="3.2"/>
<ellipse cx="1773" cy="1552" rx="7.4" ry="3.2" transform="rotate(10 1773 1552)" fill="#050505"/>
<path d="M1732 1578 L1750 1589 M1746 1568 L1768 1580 M1716 1592 L1727 1604" stroke="#2b2b2b" stroke-width="4.5" stroke-linecap="round"/>
<path d="M1966.0 1550.0 C1966.5 1546.0 1986.7 1533.3 1993.0 1532.0 C1999.3 1530.7 2055.8 1525.5 2060.0 1530.0 C2064.2 1534.5 2057.3 1592.7 2056.0 1600.0 C2054.7 1607.3 2043.0 1640.0 2040.0 1640.0 C2037.0 1640.0 2014.7 1603.2 2011.0 1600.0 C2007.3 1596.8 1988.0 1595.3 1985.0 1592.0 C1982.0 1588.7 1965.5 1554.0 1966.0 1550.0Z" fill="#050505" />
<path d="M2030.0 1640.0 C2031.2 1628.7 2037.4 1609.3 2040.0 1600.0 C2042.6 1590.7 2049.7 1567.9 2052.0 1560.0 C2054.3 1552.1 2056.2 1536.3 2060.0 1532.0 C2063.8 1527.7 2079.9 1523.8 2085.0 1523.0 C2090.1 1522.2 2100.0 1523.2 2104.0 1525.0 C2108.0 1526.8 2115.7 1535.9 2119.0 1538.0 C2122.3 1540.1 2128.4 1543.2 2132.0 1543.0 C2135.6 1542.8 2145.4 1535.0 2150.0 1536.0 C2154.6 1537.0 2167.7 1546.6 2171.0 1552.0 C2174.3 1557.4 2175.9 1576.8 2178.0 1582.0 C2180.1 1587.2 2184.7 1593.3 2189.0 1597.0 C2193.3 1600.7 2210.2 1610.0 2215.0 1614.0 C2219.8 1618.0 2228.0 1626.9 2230.0 1631.0 C2232.0 1635.1 2232.5 1642.9 2232.0 1649.0 C2231.5 1655.1 2228.0 1677.2 2226.0 1683.0 C2224.0 1688.8 2220.6 1696.7 2215.0 1699.0 C2209.4 1701.3 2190.9 1702.8 2178.0 1703.0 C2165.1 1703.2 2116.9 1701.0 2104.0 1701.0 C2091.1 1701.0 2075.6 1703.5 2067.0 1703.0 C2058.4 1702.5 2034.3 1704.3 2030.0 1697.0 C2025.7 1689.7 2028.8 1651.3 2030.0 1640.0Z" fill="#050505" />
<path d="M2041.0 1653.0 C2044.4 1651.5 2079.3 1662.9 2086.0 1664.0 C2092.7 1665.1 2132.1 1670.0 2141.0 1670.0 C2149.9 1670.0 2214.2 1662.8 2219.0 1664.0 C2223.8 1665.2 2218.2 1686.5 2213.0 1688.0 C2207.8 1689.5 2152.9 1687.1 2141.0 1687.0 C2129.1 1686.9 2041.7 1688.3 2035.0 1686.0 C2028.3 1683.7 2037.6 1654.5 2041.0 1653.0Z" fill="#dde1e4" />
<path d="M2061.0 1549.0 C2062.8 1546.8 2081.4 1534.2 2085.0 1534.0 C2088.6 1533.8 2098.8 1544.8 2097.0 1547.0 C2095.2 1549.2 2070.6 1555.8 2067.0 1556.0 C2063.4 1556.2 2059.2 1551.2 2061.0 1549.0Z" fill="#231f1e" />
<path d="M2054.0 1597.0 C2053.8 1594.1 2069.4 1579.7 2074.0 1579.0 C2078.6 1578.3 2095.1 1587.1 2100.0 1590.0 C2104.9 1592.9 2122.6 1605.2 2123.0 1608.0 C2123.4 1610.8 2108.7 1618.0 2104.0 1618.0 C2099.3 1618.0 2081.0 1610.1 2076.0 1608.0 C2071.0 1605.9 2054.2 1599.9 2054.0 1597.0Z" fill="#231f1e" />
<path d="M2167.0 1623.0 C2166.2 1620.1 2183.4 1604.6 2189.0 1605.0 C2194.6 1605.4 2222.2 1624.1 2223.0 1627.0 C2223.8 1629.9 2202.6 1634.4 2197.0 1634.0 C2191.4 1633.6 2167.8 1625.9 2167.0 1623.0Z" fill="#231f1e" />
<path d="M2043.0 1634.0 C2045.2 1633.5 2060.0 1639.7 2067.0 1642.0 C2074.0 1644.3 2111.7 1655.7 2113.0 1657.0 C2114.3 1658.3 2086.8 1656.0 2080.0 1655.0 C2073.2 1654.0 2048.7 1649.1 2045.0 1647.0 C2041.3 1644.9 2040.8 1634.5 2043.0 1634.0Z" fill="#231f1e" />
<ellipse cx="2115" cy="1575" rx="8.5" ry="18" transform="rotate(32 2115 1575)" fill="#2b2b2b" stroke="#050505" stroke-width="3.2"/>
<ellipse cx="2115" cy="1575" rx="2.9000000000000004" ry="12.2" transform="rotate(32 2115 1575)" fill="#050505"/>
<ellipse cx="2152" cy="1549" rx="13" ry="9" transform="rotate(-20 2152 1549)" fill="#2b2b2b" stroke="#050505" stroke-width="3.2"/>
<ellipse cx="2152" cy="1549" rx="7.4" ry="3.2" transform="rotate(-20 2152 1549)" fill="#050505"/>
<path d="M2135 1590 L2141 1605 M2156 1578 L2166 1596 M2170 1572 L2176 1584" stroke="#2b2b2b" stroke-width="4.5" stroke-linecap="round"/>
<path d="M1785.0 1655.0 C1784.8 1643.8 1783.7 1598.8 1786.0 1590.0 C1788.3 1581.2 1800.3 1582.2 1805.0 1580.0 C1809.7 1577.8 1822.3 1573.9 1826.0 1571.0 C1829.7 1568.1 1832.8 1557.1 1837.0 1555.0 C1841.2 1552.9 1858.4 1555.0 1862.0 1553.0 C1865.6 1551.0 1863.6 1540.2 1868.0 1538.0 C1872.4 1535.8 1894.5 1532.8 1900.0 1534.0 C1905.5 1535.2 1910.3 1545.0 1915.0 1548.0 C1919.7 1551.0 1933.8 1560.0 1940.0 1560.0 C1946.2 1560.0 1962.8 1547.4 1968.0 1548.0 C1973.2 1548.6 1983.0 1560.1 1985.0 1565.0 C1987.0 1569.9 1982.0 1586.3 1985.0 1590.0 C1988.0 1593.7 2005.8 1594.4 2011.0 1597.0 C2016.2 1599.6 2026.8 1606.4 2030.0 1612.0 C2033.2 1617.6 2037.2 1637.9 2038.0 1645.0 C2038.8 1652.1 2037.9 1667.5 2037.0 1673.0 C2036.1 1678.5 2031.5 1688.3 2030.0 1692.0 C2028.5 1695.7 2032.2 1703.2 2024.0 1705.0 C2015.8 1706.8 1974.5 1707.0 1960.0 1707.0 C1945.5 1707.0 1915.6 1705.9 1900.0 1705.0 C1884.4 1704.1 1838.0 1700.5 1826.0 1699.0 C1814.0 1697.5 1801.4 1693.5 1797.0 1692.0 C1792.6 1690.5 1789.4 1690.3 1788.0 1686.0 C1786.6 1681.7 1785.2 1666.2 1785.0 1655.0Z" fill="#050505" />
<path d="M1792.0 1651.0 C1795.1 1649.2 1838.1 1652.5 1844.0 1653.0 C1849.9 1653.5 1875.1 1657.3 1880.0 1658.0 C1884.9 1658.7 1912.7 1663.3 1918.0 1664.0 C1923.3 1664.7 1954.5 1667.7 1960.0 1668.0 C1965.5 1668.3 1995.6 1669.3 2000.0 1669.0 C2004.4 1668.7 2024.6 1662.9 2026.0 1664.0 C2027.4 1665.1 2025.4 1684.3 2021.0 1686.0 C2016.6 1687.7 1970.5 1689.9 1960.0 1690.0 C1949.5 1690.1 1873.8 1688.7 1863.0 1688.0 C1852.2 1687.3 1802.7 1682.5 1798.0 1680.0 C1793.3 1677.5 1788.9 1652.8 1792.0 1651.0Z" fill="#dde1e4" />
<path d="M1870.0 1547.0 C1872.3 1545.7 1896.3 1541.1 1900.0 1542.0 C1903.7 1542.9 1909.3 1554.7 1907.0 1556.0 C1904.7 1557.3 1880.7 1555.9 1877.0 1555.0 C1873.3 1554.1 1867.7 1548.3 1870.0 1547.0Z" fill="#231f1e" />
<path d="M1874.0 1575.0 C1877.7 1573.2 1895.9 1575.7 1900.0 1579.0 C1904.1 1582.3 1914.3 1604.1 1915.0 1608.0 C1915.7 1611.9 1912.2 1619.1 1907.0 1618.0 C1901.8 1616.9 1866.3 1601.3 1863.0 1597.0 C1859.7 1592.7 1870.3 1576.8 1874.0 1575.0Z" fill="#231f1e" />
<path d="M1846.0 1625.0 C1849.4 1624.5 1872.8 1636.8 1880.0 1640.0 C1887.2 1643.2 1918.0 1655.8 1918.0 1657.0 C1918.0 1658.2 1887.2 1653.2 1880.0 1652.0 C1872.8 1650.8 1849.4 1647.7 1846.0 1645.0 C1842.6 1642.3 1842.6 1625.5 1846.0 1625.0Z" fill="#231f1e" />
<path d="M1974.0 1623.0 C1974.4 1620.5 1987.8 1607.6 1993.0 1608.0 C1998.2 1608.4 2024.2 1624.4 2026.0 1627.0 C2027.8 1629.6 2014.7 1633.4 2011.0 1634.0 C2007.3 1634.6 1992.7 1634.1 1989.0 1633.0 C1985.3 1631.9 1973.6 1625.5 1974.0 1623.0Z" fill="#231f1e" />
<path d="M1982.0 1549.0 C1983.5 1546.6 2000.7 1545.5 2004.0 1547.0 C2007.3 1548.5 2016.5 1561.6 2015.0 1564.0 C2013.5 1566.4 1992.3 1572.5 1989.0 1571.0 C1985.7 1569.5 1980.5 1551.4 1982.0 1549.0Z" fill="#231f1e" />
<path d="M1925.0 1600.0 C1926.5 1598.4 1942.3 1602.8 1945.0 1606.0 C1947.7 1609.2 1953.5 1630.4 1952.0 1632.0 C1950.5 1633.6 1932.7 1625.2 1930.0 1622.0 C1927.3 1618.8 1923.5 1601.6 1925.0 1600.0Z" fill="#231f1e" />
<ellipse cx="1922" cy="1575" rx="8.5" ry="18" transform="rotate(32 1922 1575)" fill="#2b2b2b" stroke="#050505" stroke-width="3.2"/>
<ellipse cx="1922" cy="1575" rx="2.9000000000000004" ry="12.2" transform="rotate(32 1922 1575)" fill="#050505"/>
<ellipse cx="1966" cy="1551" rx="13" ry="9" transform="rotate(-20 1966 1551)" fill="#2b2b2b" stroke="#050505" stroke-width="3.2"/>
<ellipse cx="1966" cy="1551" rx="7.4" ry="3.2" transform="rotate(-20 1966 1551)" fill="#050505"/>
<path d="M1940 1592 L1946 1606 M1960 1580 L1970 1597 M1974 1572 L1981 1585" stroke="#2b2b2b" stroke-width="4.5" stroke-linecap="round"/>
<path d="M1903 1540 L1935 1562" stroke="#1a1a1a" stroke-width="6" stroke-linecap="round"/>
<path d="M1801.0 1519.0 C1807.1 1518.6 1857.7 1531.9 1864.0 1534.0 C1870.3 1536.1 1864.5 1538.3 1864.0 1540.0 C1863.5 1541.7 1861.9 1549.5 1859.0 1551.0 C1856.1 1552.5 1840.6 1556.3 1835.0 1555.0 C1829.4 1553.7 1806.4 1541.6 1803.0 1538.0 C1799.6 1534.4 1794.9 1519.4 1801.0 1519.0Z" fill="#e2e5e8" />
<path d="M1993.0 1530.0 C1998.6 1528.1 2054.1 1526.3 2060.0 1528.0 C2065.9 1529.7 2055.4 1544.3 2052.0 1547.0 C2048.6 1549.7 2030.8 1555.0 2026.0 1555.0 C2021.2 1555.0 2007.3 1549.5 2004.0 1547.0 C2000.7 1544.5 1987.4 1531.9 1993.0 1530.0Z" fill="#e2e5e8" />
<g filter="url(#bl2)">
<path d="M1790.0 1050.0 C1817.8 1036.7 2073.1 1040.0 2100.0 1040.0 C2126.9 1040.0 2111.8 1037.9 2113.0 1050.0 C2114.2 1062.1 2112.2 1171.2 2114.0 1185.0 C2115.8 1198.8 2132.2 1205.4 2134.0 1215.0 C2135.8 1224.6 2136.0 1284.6 2136.0 1300.0 C2136.0 1315.4 2134.3 1382.9 2134.0 1400.0 C2133.7 1417.1 2133.2 1494.3 2132.0 1505.0 C2130.8 1515.7 2127.7 1525.2 2120.0 1528.0 C2112.3 1530.8 2053.3 1537.5 2040.0 1538.0 C2026.7 1538.5 1968.8 1534.3 1960.0 1534.0 C1951.2 1533.7 1943.3 1533.5 1935.0 1534.0 C1926.7 1534.5 1872.1 1540.5 1860.0 1540.0 C1847.9 1539.5 1797.8 1530.9 1790.0 1528.0 C1782.2 1525.1 1768.2 1515.7 1766.0 1505.0 C1763.8 1494.3 1764.2 1421.2 1764.0 1400.0 C1763.8 1378.8 1762.8 1266.7 1763.0 1250.0 C1763.2 1233.3 1763.8 1216.7 1766.0 1200.0 C1768.2 1183.3 1762.2 1063.3 1790.0 1050.0Z" fill="#0b0b0b" />
</g>
<g filter="url(#bl10)" opacity="0.22">
<path d="M1790.0 1130.0 C1798.0 1108.7 1911.0 1108.7 1920.0 1130.0 C1929.0 1151.3 1933.0 1428.7 1925.0 1450.0 C1917.0 1471.3 1809.0 1471.3 1800.0 1450.0 C1791.0 1428.7 1782.0 1151.3 1790.0 1130.0Z" fill="#161616" />
<path d="M2010.0 1130.0 C2017.3 1108.7 2103.7 1108.7 2110.0 1130.0 C2116.3 1151.3 2112.3 1428.7 2105.0 1450.0 C2097.7 1471.3 2006.3 1471.3 2000.0 1450.0 C1993.7 1428.7 2002.7 1151.3 2010.0 1130.0Z" fill="#151515" />
</g>
<g filter="url(#bl2)">
<path d="M1942.0 1125.0 C1945.3 1114.3 1954.0 1116.5 1960.0 1116.0 C1966.0 1115.5 1973.8 1114.7 1978.0 1122.0 C1982.2 1129.3 1982.3 1147.0 1985.0 1160.0 C1987.7 1173.0 1992.2 1185.0 1994.0 1200.0 C1995.8 1215.0 1996.3 1235.0 1996.0 1250.0 C1995.7 1265.0 1995.5 1280.8 1992.0 1290.0 C1988.5 1299.2 1982.0 1302.0 1975.0 1305.0 C1968.0 1308.0 1955.5 1315.5 1950.0 1308.0 C1944.5 1300.5 1943.7 1281.3 1942.0 1260.0 C1940.3 1238.7 1940.0 1202.5 1940.0 1180.0 C1940.0 1157.5 1938.7 1135.7 1942.0 1125.0Z" fill="#030303" />
</g>
<path d="M1788 1496 Q1860 1526 1922 1514" fill="none" stroke="#131313" stroke-width="28" stroke-linecap="round"/>
<path d="M1966 1513 Q2045 1522 2108 1494" fill="none" stroke="#131313" stroke-width="28" stroke-linecap="round"/>
<g filter="url(#bl2)">
<path d="M2078.0 545.0 C2084.2 542.2 2097.6 536.5 2103.0 536.0 C2108.4 535.5 2119.6 538.7 2124.0 541.0 C2128.4 543.3 2138.4 551.9 2141.0 556.0 C2143.6 560.1 2145.7 571.1 2146.0 576.0 C2146.3 580.9 2143.5 593.1 2144.0 598.0 C2144.5 602.9 2147.4 612.9 2150.0 618.0 C2152.6 623.1 2161.3 632.1 2166.0 642.0 C2170.7 651.9 2185.2 687.8 2190.0 703.0 C2194.8 718.2 2203.4 751.9 2207.0 772.0 C2210.6 792.1 2217.8 851.0 2221.0 875.0 C2224.2 899.0 2231.6 959.6 2234.0 978.0 C2236.4 996.4 2241.5 1025.3 2242.0 1033.0 C2242.5 1040.7 2247.0 1042.2 2238.0 1044.0 C2229.0 1045.8 2177.0 1046.8 2165.0 1048.0 C2153.0 1049.2 2140.5 1052.1 2135.0 1054.0 C2129.5 1055.9 2120.7 1058.6 2118.0 1064.0 C2115.3 1069.4 2117.0 1095.8 2112.0 1100.0 C2107.0 1104.2 2079.3 1153.7 2075.0 1100.0 C2070.7 1046.3 2079.1 698.3 2075.0 640.0 C2070.9 581.7 2042.9 609.3 2040.0 600.0 C2037.1 590.7 2045.6 566.4 2050.0 560.0 C2054.4 553.6 2071.8 547.8 2078.0 545.0Z" fill="#050505" />
<path d="M1781.0 539.0 C1786.1 537.1 1801.2 535.6 1806.0 536.0 C1810.8 536.4 1818.6 534.5 1822.0 542.0 C1825.4 549.5 1825.9 588.6 1835.0 600.0 C1844.1 611.4 1894.3 583.4 1900.0 640.0 C1905.7 696.6 1893.6 1032.5 1884.0 1085.0 C1874.4 1137.5 1832.0 1089.0 1818.0 1090.0 C1804.0 1091.0 1772.5 1094.8 1764.0 1094.0 C1755.5 1093.2 1747.7 1087.2 1745.0 1083.0 C1742.3 1078.8 1749.0 1061.7 1741.0 1058.0 C1733.0 1054.3 1684.5 1053.5 1676.0 1051.0 C1667.5 1048.5 1668.6 1043.0 1668.0 1037.0 C1667.4 1031.0 1669.7 1010.0 1671.0 1000.0 C1672.3 990.0 1676.8 966.6 1679.0 951.0 C1681.2 935.4 1687.1 881.5 1690.0 866.0 C1692.9 850.5 1701.0 831.3 1704.0 818.0 C1707.0 804.7 1711.6 767.4 1716.0 752.0 C1720.4 736.6 1736.6 697.5 1742.0 686.0 C1747.4 674.5 1758.2 658.7 1762.0 653.0 C1765.8 647.3 1773.8 640.3 1775.0 637.0 C1776.2 633.7 1773.6 629.5 1772.0 625.0 C1770.4 620.5 1762.8 604.6 1761.0 598.0 C1759.2 591.4 1756.9 573.4 1757.0 568.0 C1757.1 562.6 1759.2 555.4 1762.0 552.0 C1764.8 548.6 1775.9 540.9 1781.0 539.0Z" fill="#050505" />
</g>
<path d="M1990.0 570.0 C1996.0 557.0 2040.5 533.0 2050.0 530.0 C2059.5 527.0 2080.0 533.0 2085.0 540.0 C2090.0 547.0 2099.5 588.0 2100.0 600.0 C2100.5 612.0 2101.0 654.0 2090.0 660.0 C2079.0 666.0 2000.0 669.0 1990.0 660.0 C1980.0 651.0 1984.0 583.0 1990.0 570.0Z" fill="#050505" />
<path d="M1830.0 640.0 C1838.8 624.3 2071.6 614.7 2080.0 630.0 C2088.4 645.3 2090.8 1084.3 2082.0 1100.0 C2073.2 1115.7 1823.4 1115.3 1815.0 1100.0 C1806.6 1084.7 1821.2 655.7 1830.0 640.0Z" fill="#050505" />
<path d="M1850.0 650.0 C1853.9 633.3 1885.0 629.2 1893.0 630.0 C1901.0 630.8 1937.1 658.5 1946.0 660.0 C1954.9 661.5 1993.0 647.3 2000.0 648.0 C2007.0 648.7 2023.7 663.7 2030.0 668.0 C2036.3 672.3 2072.2 685.7 2076.0 700.0 C2079.8 714.3 2074.7 819.8 2076.0 840.0 C2077.3 860.2 2089.3 926.3 2092.0 943.0 C2094.7 959.7 2107.3 1029.2 2108.0 1040.0 C2108.7 1050.8 2123.0 1070.2 2100.0 1073.0 C2077.0 1075.8 1854.7 1079.1 1832.0 1073.0 C1809.3 1066.9 1827.5 1014.8 1828.0 1000.0 C1828.5 985.2 1836.5 909.2 1838.0 895.0 C1839.5 880.8 1845.0 850.4 1846.0 830.0 C1847.0 809.6 1846.1 666.7 1850.0 650.0Z" fill="#2b2625" />
<g filter="url(#bl5)" opacity="0.8">
<path d="M2015.0 650.0 C2026.0 653.3 2065.8 671.7 2076.0 690.0 C2086.2 708.3 2082.0 758.3 2076.0 760.0 C2070.0 761.7 2051.0 715.0 2040.0 700.0 C2029.0 685.0 2014.2 678.3 2010.0 670.0 C2005.8 661.7 2004.0 646.7 2015.0 650.0Z" fill="#131212" />
</g>
<g filter="url(#bl10)" opacity="0.28">
<path d="M1905.0 720.0 C1914.2 686.7 1928.3 670.0 1935.0 700.0 C1941.7 730.0 1950.8 850.0 1945.0 900.0 C1939.2 950.0 1910.8 1000.0 1900.0 1000.0 C1889.2 1000.0 1879.2 946.7 1880.0 900.0 C1880.8 853.3 1895.8 753.3 1905.0 720.0Z" fill="#322b2a" />
<path d="M2025.0 700.0 C2030.0 681.7 2053.2 663.3 2060.0 690.0 C2066.8 716.7 2069.3 825.0 2066.0 860.0 C2062.7 895.0 2046.0 910.0 2040.0 900.0 C2034.0 890.0 2032.5 833.3 2030.0 800.0 C2027.5 766.7 2020.0 718.3 2025.0 700.0Z" fill="#343030" />
</g>
<path d="M1832.0 1040.0 C1836.5 1038.0 1890.0 1045.8 1900.0 1046.0 C1910.0 1046.2 1972.0 1041.9 1982.0 1043.0 C1992.0 1044.1 2042.3 1061.4 2050.0 1062.0 C2057.7 1062.6 2094.7 1051.1 2098.0 1052.0 C2101.3 1052.9 2117.7 1074.4 2100.0 1076.0 C2082.3 1077.6 1849.9 1078.4 1832.0 1076.0 C1814.1 1073.6 1827.5 1042.0 1832.0 1040.0Z" fill="#242221" />
<path d="M1822.0 1073.0 C1831.5 1072.1 2094.4 1072.1 2104.0 1073.0 C2113.6 1073.9 2119.5 1098.1 2110.0 1099.0 C2100.5 1099.9 1829.6 1099.9 1820.0 1099.0 C1810.4 1098.1 1812.5 1073.9 1822.0 1073.0Z" fill="#060606" />
<path d="M2112.0 625.0 C2114.3 610.4 2125.3 610.2 2130.0 612.0 C2134.7 613.8 2146.4 629.1 2152.0 640.0 C2157.6 650.9 2173.0 689.6 2178.0 705.0 C2183.0 720.4 2191.4 752.2 2195.0 772.0 C2198.6 791.8 2205.8 851.0 2209.0 875.0 C2212.2 899.0 2219.6 960.1 2222.0 978.0 C2224.4 995.9 2235.8 1021.9 2230.0 1028.0 C2224.2 1034.1 2180.2 1035.8 2172.0 1030.0 C2163.8 1024.2 2163.5 992.1 2160.0 978.0 C2156.5 963.9 2146.8 927.1 2142.0 909.0 C2137.2 890.9 2122.7 843.1 2119.0 823.0 C2115.3 802.9 2110.8 760.1 2110.0 737.0 C2109.2 713.9 2109.7 639.6 2112.0 625.0Z" fill="#1b1a19" />
<path d="M1783.0 650.0 C1787.2 647.7 1805.7 637.7 1806.0 640.0 C1806.3 642.3 1790.8 660.8 1786.0 670.0 C1781.2 679.2 1769.0 707.6 1765.0 719.0 C1761.0 730.4 1754.1 756.5 1752.0 768.0 C1749.9 779.5 1747.7 806.6 1747.0 818.0 C1746.3 829.4 1746.7 847.1 1746.0 866.0 C1745.3 884.9 1741.7 959.0 1741.0 980.0 C1740.3 1001.0 1746.8 1039.0 1740.0 1046.0 C1733.2 1053.0 1690.0 1045.4 1683.0 1040.0 C1676.0 1034.6 1679.2 1010.4 1680.0 1000.0 C1680.8 989.6 1687.5 966.6 1690.0 951.0 C1692.5 935.4 1698.1 881.5 1701.0 866.0 C1703.9 850.5 1712.0 831.3 1715.0 818.0 C1718.0 804.7 1722.7 766.9 1727.0 752.0 C1731.3 737.1 1747.0 700.7 1752.0 690.0 C1757.0 679.3 1766.4 664.7 1770.0 660.0 C1773.6 655.3 1778.8 652.3 1783.0 650.0Z" fill="#1c1b1a" />
<path d="M1830.0 652.0 C1834.7 649.4 1840.4 648.6 1844.0 650.0 C1847.6 651.4 1857.5 659.3 1861.0 664.0 C1864.5 668.7 1871.9 683.6 1874.0 690.0 C1876.1 696.4 1878.8 711.8 1879.0 719.0 C1879.2 726.2 1877.3 744.3 1876.0 752.0 C1874.7 759.7 1870.6 778.4 1868.0 785.0 C1865.4 791.6 1856.9 804.2 1854.0 809.0 C1851.1 813.8 1845.1 821.1 1843.0 826.0 C1840.9 830.9 1837.2 843.0 1836.0 851.0 C1834.8 859.0 1834.8 880.0 1833.0 895.0 C1831.2 910.0 1822.8 959.6 1821.0 980.0 C1819.2 1000.4 1821.6 1058.3 1818.0 1070.0 C1814.4 1081.7 1797.7 1079.8 1790.0 1080.0 C1782.3 1080.2 1756.9 1083.7 1752.0 1072.0 C1747.1 1060.3 1747.4 1004.0 1748.0 980.0 C1748.6 956.0 1755.8 884.9 1757.0 866.0 C1758.2 847.1 1757.1 829.4 1758.0 818.0 C1758.9 806.6 1762.4 779.5 1765.0 768.0 C1767.6 756.5 1775.5 730.2 1780.0 719.0 C1784.5 707.8 1798.2 679.8 1804.0 672.0 C1809.8 664.2 1825.3 654.6 1830.0 652.0Z" fill="#1d1b1a" stroke="#050505" stroke-width="9" stroke-linejoin="round" stroke-linecap="round" />
<g filter="url(#bl10)" opacity="0.5">
<path d="M1815.0 700.0 C1823.3 685.0 1839.2 676.7 1845.0 690.0 C1850.8 703.3 1855.0 745.0 1850.0 780.0 C1845.0 815.0 1825.0 880.0 1815.0 900.0 C1805.0 920.0 1793.3 920.0 1790.0 900.0 C1786.7 880.0 1790.8 813.3 1795.0 780.0 C1799.2 746.7 1806.7 715.0 1815.0 700.0Z" fill="#222020" />
</g>
<path d="M1950 664 Q1952 745.0 1966 826" fill="none" stroke="#050505" stroke-width="29" stroke-linecap="round"/>
<path d="M1950 668 Q1952 745.0 1966 820" fill="none" stroke="#1d1d1d" stroke-width="14" stroke-linecap="butt"/>
<path d="M2002 658 Q2004 752.0 2015 846" fill="none" stroke="#050505" stroke-width="27" stroke-linecap="round"/>
<path d="M2002 662 Q2004 752.0 2015 840" fill="none" stroke="#1d1d1d" stroke-width="12" stroke-linecap="butt"/>
<path d="M1840 640 Q1870 648 1893 628 Q1946 670 2005 636 Q2030 640 2052 628" fill="none" stroke="#050505" stroke-width="14" stroke-linecap="round"/>
<path d="M1940.7 915.4 C1945.2 910.4 1958.2 904.8 1965.7 902.0 C1973.2 899.2 1982.7 897.1 1990.7 896.6 C1998.7 896.1 2012.4 896.9 2019.3 898.4 C2026.2 899.9 2033.8 901.4 2037.0 906.4 C2040.2 911.4 2039.6 922.3 2040.7 931.4 C2041.8 940.5 2042.4 956.3 2044.3 967.0 C2046.2 977.7 2050.9 992.2 2053.2 1002.9 C2055.5 1013.6 2058.4 1030.8 2059.5 1038.6 C2060.6 1046.4 2061.6 1051.1 2060.4 1054.6 C2059.2 1058.1 2057.0 1062.3 2051.4 1061.8 C2045.8 1061.3 2032.0 1054.8 2022.9 1051.0 C2013.8 1047.2 1997.1 1039.3 1990.7 1036.8 C1984.3 1034.2 1985.9 1034.0 1980.0 1034.0 C1974.1 1034.0 1961.0 1035.8 1951.4 1036.8 C1941.8 1037.8 1924.5 1040.4 1915.7 1040.4 C1906.9 1040.4 1896.2 1038.4 1892.5 1036.8 C1888.8 1035.2 1888.6 1034.7 1890.7 1029.6 C1892.8 1024.5 1901.7 1012.3 1906.8 1002.9 C1911.9 993.5 1920.3 977.2 1924.6 967.0 C1928.9 956.8 1933.0 942.7 1935.4 935.0 C1937.8 927.3 1936.2 920.4 1940.7 915.4Z" fill="#262322" stroke="#050505" stroke-width="9" stroke-linejoin="round" stroke-linecap="round" />
<path d="M2165.0 1046.0 C2170.2 1042.5 2187.2 1044.8 2200.0 1044.0 C2212.8 1043.2 2233.5 1039.5 2242.0 1041.0 C2250.5 1042.5 2247.0 1049.2 2251.0 1053.0 C2255.0 1056.8 2261.2 1059.3 2266.0 1064.0 C2270.8 1068.7 2277.2 1075.2 2280.0 1081.0 C2282.8 1086.8 2283.5 1092.0 2283.0 1099.0 C2282.5 1106.0 2279.7 1116.5 2277.0 1123.0 C2274.3 1129.5 2269.3 1132.5 2267.0 1138.0 C2264.7 1143.5 2265.5 1150.7 2263.0 1156.0 C2260.5 1161.3 2255.8 1166.7 2252.0 1170.0 C2248.2 1173.3 2243.7 1175.8 2240.0 1176.0 C2236.3 1176.2 2232.7 1173.3 2230.0 1171.0 C2227.3 1168.7 2226.8 1162.7 2224.0 1162.0 C2221.2 1161.3 2216.8 1167.0 2213.0 1167.0 C2209.2 1167.0 2204.5 1164.8 2201.0 1162.0 C2197.5 1159.2 2194.0 1154.0 2192.0 1150.0 C2190.0 1146.0 2190.0 1144.5 2189.0 1138.0 C2188.0 1131.5 2187.8 1120.0 2186.0 1111.0 C2184.2 1102.0 2180.8 1091.7 2178.0 1084.0 C2175.2 1076.3 2171.2 1071.3 2169.0 1065.0 C2166.8 1058.7 2159.8 1049.5 2165.0 1046.0Z" fill="#b35a1d" stroke="#050505" stroke-width="5.5" stroke-linejoin="round" stroke-linecap="round" />
<path d="M2232 1084 Q2222 1094 2229 1115 Q2238 1138 2233 1153 Q2229 1160 2224 1162" fill="none" stroke="#050505" stroke-width="4.5" stroke-linecap="round"/>
<path d="M2229 1086 Q2242 1098 2248 1117 M2234 1113 L2246 1110" fill="none" stroke="#050505" stroke-width="4" stroke-linecap="round"/>
<path d="M1674.0 1049.0 C1681.0 1047.2 1688.8 1052.5 1700.0 1054.0 C1711.2 1055.5 1733.5 1052.0 1741.0 1058.0 C1748.5 1064.0 1746.8 1081.3 1745.0 1090.0 C1743.2 1098.7 1734.8 1102.5 1730.0 1110.0 C1725.2 1117.5 1718.2 1126.7 1716.0 1135.0 C1713.8 1143.3 1718.8 1153.5 1717.0 1160.0 C1715.2 1166.5 1708.8 1171.3 1705.0 1174.0 C1701.2 1176.7 1697.5 1174.5 1694.0 1176.0 C1690.5 1177.5 1687.8 1182.0 1684.0 1183.0 C1680.2 1184.0 1674.8 1184.0 1671.0 1182.0 C1667.2 1180.0 1663.7 1175.3 1661.0 1171.0 C1658.3 1166.7 1657.5 1161.0 1655.0 1156.0 C1652.5 1151.0 1649.0 1146.3 1646.0 1141.0 C1643.0 1135.7 1639.0 1130.0 1637.0 1124.0 C1635.0 1118.0 1633.3 1111.7 1634.0 1105.0 C1634.7 1098.3 1637.0 1090.7 1641.0 1084.0 C1645.0 1077.3 1652.5 1070.8 1658.0 1065.0 C1663.5 1059.2 1667.0 1050.8 1674.0 1049.0Z" fill="#b35a1d" stroke="#050505" stroke-width="5.5" stroke-linejoin="round" stroke-linecap="round" />
<path d="M1687 1096 Q1690 1100 1681 1125 Q1678 1145 1686 1160 Q1692 1170 1697 1174" fill="none" stroke="#050505" stroke-width="4.5" stroke-linecap="round"/>
<path d="M1690 1099 Q1680 1115 1671 1129 M1677 1120 L1687 1124" fill="none" stroke="#050505" stroke-width="4" stroke-linecap="round"/>
<path d="M1744.0 1086.0 C1750.3 1082.7 1755.7 1090.2 1764.0 1091.0 C1772.3 1091.8 1785.0 1092.2 1794.0 1091.0 C1803.0 1089.8 1813.3 1083.2 1818.0 1084.0 C1822.7 1084.8 1821.5 1089.0 1822.0 1096.0 C1822.5 1103.0 1820.8 1118.8 1821.0 1126.0 C1821.2 1133.2 1821.5 1136.5 1823.0 1139.0 C1824.5 1141.5 1828.0 1138.7 1830.0 1141.0 C1832.0 1143.3 1835.2 1149.0 1835.0 1153.0 C1834.8 1157.0 1832.0 1161.8 1829.0 1165.0 C1826.0 1168.2 1820.2 1169.7 1817.0 1172.0 C1813.8 1174.3 1811.8 1175.3 1810.0 1179.0 C1808.2 1182.7 1808.7 1190.0 1806.0 1194.0 C1803.3 1198.0 1798.0 1201.0 1794.0 1203.0 C1790.0 1205.0 1784.8 1204.3 1782.0 1206.0 C1779.2 1207.7 1780.0 1210.7 1777.0 1213.0 C1774.0 1215.3 1768.5 1220.0 1764.0 1220.0 C1759.5 1220.0 1753.8 1216.7 1750.0 1213.0 C1746.2 1209.3 1744.5 1203.7 1741.0 1198.0 C1737.5 1192.3 1733.0 1186.0 1729.0 1179.0 C1725.0 1172.0 1719.3 1163.7 1717.0 1156.0 C1714.7 1148.3 1713.5 1140.5 1715.0 1133.0 C1716.5 1125.5 1721.2 1118.8 1726.0 1111.0 C1730.8 1103.2 1737.7 1089.3 1744.0 1086.0Z" fill="#b35a1d" stroke="#050505" stroke-width="5.5" stroke-linejoin="round" stroke-linecap="round" />
<path d="M1764 1133 Q1768 1138 1760 1160 Q1757 1182 1765 1196 Q1771 1204 1778 1208" fill="none" stroke="#050505" stroke-width="4.5" stroke-linecap="round"/>
<path d="M1767 1136 Q1757 1152 1750 1166 M1755 1157 L1765 1160" fill="none" stroke="#050505" stroke-width="4" stroke-linecap="round"/>
<path d="M1821 1140 Q1816 1160 1816 1172" fill="none" stroke="#050505" stroke-width="4.5" stroke-linecap="round"/>
<g filter="url(#bl5)" opacity="0.55">
<path d="M1700.0 1075.0 C1705.3 1069.2 1721.2 1065.8 1722.0 1075.0 C1722.8 1084.2 1710.3 1124.2 1705.0 1130.0 C1699.7 1135.8 1690.8 1119.2 1690.0 1110.0 C1689.2 1100.8 1694.7 1080.8 1700.0 1075.0Z" fill="#c97430" />
<path d="M1775.0 1105.0 C1778.7 1097.5 1796.7 1094.2 1800.0 1105.0 C1803.3 1115.8 1798.7 1162.5 1795.0 1170.0 C1791.3 1177.5 1781.3 1160.8 1778.0 1150.0 C1774.7 1139.2 1771.3 1112.5 1775.0 1105.0Z" fill="#c97430" />
<path d="M2200.0 1060.0 C2205.3 1052.0 2227.5 1052.0 2230.0 1062.0 C2232.5 1072.0 2220.3 1112.0 2215.0 1120.0 C2209.7 1128.0 2200.5 1120.0 2198.0 1110.0 C2195.5 1100.0 2194.7 1068.0 2200.0 1060.0Z" fill="#c97430" />
<path d="M2260.0 1085.0 C2264.2 1080.8 2274.7 1085.8 2275.0 1095.0 C2275.3 1104.2 2266.2 1135.8 2262.0 1140.0 C2257.8 1144.2 2250.3 1129.2 2250.0 1120.0 C2249.7 1110.8 2255.8 1089.2 2260.0 1085.0Z" fill="#c97430" />
</g>
<path d="M1672 1042 Q1700 1056 1741 1057" fill="none" stroke="#050505" stroke-width="11" stroke-linecap="round"/>
<path d="M1744 1078 Q1775 1096 1820 1082" fill="none" stroke="#050505" stroke-width="11" stroke-linecap="round"/>
<path d="M2166 1040 Q2205 1045 2240 1034" fill="none" stroke="#050505" stroke-width="11" stroke-linecap="round"/>
<path d="M1885.0 610.0 C1875.5 615.3 1889.7 618.3 1893.0 622.0 C1896.3 625.7 1900.3 628.7 1905.0 632.0 C1909.7 635.3 1914.2 639.3 1921.0 642.0 C1927.8 644.7 1937.7 647.7 1946.0 648.0 C1954.3 648.3 1963.0 646.7 1971.0 644.0 C1979.0 641.3 1988.0 636.8 1994.0 632.0 C2000.0 627.2 2004.0 620.7 2007.0 615.0 C2010.0 609.3 2011.5 604.7 2012.0 598.0 C2012.5 591.3 2020.3 576.3 2010.0 575.0 C1999.7 573.7 1970.8 584.2 1950.0 590.0 C1929.2 595.8 1894.5 604.7 1885.0 610.0Z" fill="#a94e0c" stroke="#050505" stroke-width="8" stroke-linejoin="round" stroke-linecap="round" />
<path d="M1930.0 644.0 C1929.3 645.8 1939.2 647.2 1946.0 647.0 C1952.8 646.8 1963.0 645.7 1971.0 643.0 C1979.0 640.3 1988.2 635.7 1994.0 631.0 C1999.8 626.3 2003.7 620.2 2006.0 615.0 C2008.3 609.8 2009.8 600.5 2008.0 600.0 C2006.2 599.5 2000.5 607.3 1995.0 612.0 C1989.5 616.7 1982.5 624.0 1975.0 628.0 C1967.5 632.0 1957.5 633.3 1950.0 636.0 C1942.5 638.7 1930.7 642.2 1930.0 644.0Z" fill="#8a3d07" />
<path d="M1830.0 381.0 C1831.2 378.5 1833.9 376.1 1836.0 373.0 C1838.1 369.9 1842.9 361.7 1846.0 358.0 C1849.1 354.3 1854.5 347.9 1859.0 345.0 C1863.5 342.1 1874.3 336.9 1880.0 336.0 C1885.7 335.1 1896.9 338.7 1902.0 338.0 C1907.1 337.3 1913.2 332.3 1918.0 331.0 C1922.8 329.7 1932.5 328.0 1938.0 328.0 C1943.5 328.0 1953.5 329.9 1959.0 331.0 C1964.5 332.1 1973.4 335.5 1979.0 336.0 C1984.6 336.5 1995.5 334.3 2001.0 335.0 C2006.5 335.7 2015.2 338.3 2020.0 341.0 C2024.8 343.7 2033.3 351.4 2037.0 355.0 C2040.7 358.6 2045.3 364.9 2048.0 368.0 C2050.7 371.1 2055.7 375.3 2057.0 378.0 C2058.3 380.7 2058.4 385.9 2058.0 388.0 C2057.6 390.1 2053.5 391.2 2054.0 394.0 C2054.5 396.8 2060.4 404.3 2062.0 409.0 C2063.6 413.7 2065.7 423.5 2066.0 429.0 C2066.3 434.5 2065.1 446.1 2064.0 450.0 C2062.9 453.9 2057.5 455.6 2058.0 458.0 C2058.5 460.4 2066.4 464.7 2068.0 468.0 C2069.6 471.3 2070.7 478.7 2070.0 483.0 C2069.3 487.3 2062.2 496.7 2063.0 500.0 C2063.8 503.3 2074.4 505.2 2076.0 508.0 C2077.6 510.8 2076.1 518.3 2075.0 521.0 C2073.9 523.7 2069.2 524.4 2068.0 528.0 C2066.8 531.6 2067.6 543.5 2066.0 548.0 C2064.4 552.5 2060.8 557.7 2056.0 562.0 C2051.2 566.3 2036.5 576.3 2030.0 580.0 C2023.5 583.7 2011.4 587.9 2007.0 590.0 C2002.6 592.1 2000.7 594.4 1997.0 596.0 C1993.3 597.6 1984.1 600.4 1979.0 602.0 C1973.9 603.6 1964.5 606.3 1959.0 608.0 C1953.5 609.7 1943.9 613.3 1938.0 615.0 C1932.1 616.7 1919.4 619.7 1915.0 621.0 C1910.6 622.3 1907.9 624.7 1905.0 625.0 C1902.1 625.3 1897.7 622.9 1893.0 623.0 C1888.3 623.1 1877.2 625.9 1870.0 626.0 C1862.8 626.1 1844.6 627.5 1839.0 624.0 C1833.4 620.5 1829.7 606.5 1828.0 600.0 C1826.3 593.5 1826.8 580.9 1826.0 575.0 C1825.2 569.1 1822.5 561.9 1822.0 556.0 C1821.5 550.1 1823.3 536.7 1822.0 531.0 C1820.7 525.3 1814.1 517.1 1812.0 513.0 C1809.9 508.9 1806.5 502.9 1806.0 500.0 C1805.5 497.1 1808.3 493.9 1808.0 491.0 C1807.7 488.1 1804.3 481.7 1804.0 478.0 C1803.7 474.3 1804.3 466.5 1806.0 463.0 C1807.7 459.5 1816.2 455.2 1817.0 452.0 C1817.8 448.8 1812.4 442.7 1812.0 439.0 C1811.6 435.3 1812.1 428.0 1814.0 424.0 C1815.9 420.0 1824.3 413.3 1826.0 409.0 C1827.7 404.7 1826.5 395.7 1827.0 392.0 C1827.5 388.3 1828.8 383.5 1830.0 381.0Z" fill="#050505" />
<path d="M1841.0 384.0 C1847.1 381.7 1868.0 384.7 1880.0 385.0 C1892.0 385.3 1924.2 381.1 1931.0 386.0 C1937.8 390.9 1929.0 415.3 1931.0 422.0 C1933.0 428.7 1942.3 431.6 1946.0 436.0 C1949.7 440.4 1956.6 449.8 1959.0 455.0 C1961.4 460.2 1963.2 469.0 1964.0 475.0 C1964.8 481.0 1965.4 494.3 1965.0 500.0 C1964.6 505.7 1962.5 513.6 1961.0 518.0 C1959.5 522.4 1956.0 529.5 1954.0 533.0 C1952.0 536.5 1949.2 541.7 1946.0 544.0 C1942.8 546.3 1935.5 548.0 1930.0 550.0 C1924.5 552.0 1910.9 558.1 1905.0 559.0 C1899.1 559.9 1890.4 558.7 1886.0 557.0 C1881.6 555.3 1876.0 548.8 1872.0 546.0 C1868.0 543.2 1860.3 537.7 1856.0 536.0 C1851.7 534.3 1843.7 533.8 1840.0 533.0 C1836.3 532.2 1830.5 531.7 1828.0 530.0 C1825.5 528.3 1822.7 522.1 1821.0 520.0 C1819.3 517.9 1815.4 515.7 1815.0 514.0 C1814.6 512.3 1816.5 509.4 1818.0 507.0 C1819.5 504.6 1824.3 498.9 1826.0 496.0 C1827.7 493.1 1830.2 488.2 1831.0 485.0 C1831.8 481.8 1831.3 475.5 1832.0 472.0 C1832.7 468.5 1836.3 461.9 1836.0 459.0 C1835.7 456.1 1831.2 453.2 1830.0 450.0 C1828.8 446.8 1827.1 439.5 1827.0 435.0 C1826.9 430.5 1828.1 420.4 1829.0 416.0 C1829.9 411.6 1832.4 406.3 1834.0 402.0 C1835.6 397.7 1834.9 386.3 1841.0 384.0Z" fill="#a94e0c" />
<path d="M1826.0 532.0 C1827.4 529.5 1836.4 529.7 1838.0 531.0 C1839.6 532.3 1839.0 542.5 1842.0 545.0 C1845.0 547.5 1865.4 552.8 1868.0 556.0 C1870.6 559.2 1868.2 573.7 1868.0 577.0 C1867.8 580.3 1868.0 588.1 1866.0 589.0 C1864.0 589.9 1851.6 586.3 1848.0 586.0 C1844.4 585.7 1831.9 587.2 1830.0 586.0 C1828.1 584.8 1829.6 577.0 1829.0 574.0 C1828.4 571.0 1824.3 560.2 1824.0 556.0 C1823.7 551.8 1824.6 534.5 1826.0 532.0Z" fill="#a94e0c" />
<g filter="url(#bl5)" opacity="0.75">
<path d="M1848.0 392.0 C1858.8 389.3 1904.3 389.3 1915.0 392.0 C1925.7 394.7 1922.8 405.3 1912.0 408.0 C1901.2 410.7 1860.7 410.7 1850.0 408.0 C1839.3 405.3 1837.2 394.7 1848.0 392.0Z" fill="#b9611f" />
<path d="M1880.0 525.0 C1883.3 516.3 1907.5 503.3 1920.0 500.0 C1932.5 496.7 1950.8 499.2 1955.0 505.0 C1959.2 510.8 1954.2 527.2 1945.0 535.0 C1935.8 542.8 1910.8 553.7 1900.0 552.0 C1889.2 550.3 1876.7 533.7 1880.0 525.0Z" fill="#b9611f" />
<path d="M1925.0 440.0 C1926.7 435.0 1944.5 441.7 1950.0 450.0 C1955.5 458.3 1959.7 485.0 1958.0 490.0 C1956.3 495.0 1945.5 488.3 1940.0 480.0 C1934.5 471.7 1923.3 445.0 1925.0 440.0Z" fill="#b9611f" />
<path d="M1836.0 470.0 C1838.7 461.7 1846.3 456.2 1848.0 462.0 C1849.7 467.8 1848.7 496.7 1846.0 505.0 C1843.3 513.3 1833.7 517.8 1832.0 512.0 C1830.3 506.2 1833.3 478.3 1836.0 470.0Z" fill="#c06a2a" />
</g>
<path d="M1973.0 505.0 C1973.8 502.2 1983.0 495.5 1987.0 491.0 C1991.0 486.5 1992.0 481.3 1997.0 478.0 C2002.0 474.7 2010.3 472.0 2017.0 471.0 C2023.7 470.0 2031.5 470.3 2037.0 472.0 C2042.5 473.7 2047.3 476.3 2050.0 481.0 C2052.7 485.7 2053.3 493.8 2053.0 500.0 C2052.7 506.2 2051.0 513.2 2048.0 518.0 C2045.0 522.8 2039.7 526.7 2035.0 529.0 C2030.3 531.3 2025.2 532.5 2020.0 532.0 C2014.8 531.5 2008.3 528.7 2004.0 526.0 C1999.7 523.3 1997.7 519.0 1994.0 516.0 C1990.3 513.0 1985.5 509.8 1982.0 508.0 C1978.5 506.2 1972.2 507.8 1973.0 505.0Z" fill="#a94e0c" stroke="#050505" stroke-width="5" stroke-linejoin="round" stroke-linecap="round" />
<g filter="url(#bl2)" opacity="0.7">
<path d="M2040.0 480.0 C2040.8 478.3 2047.5 484.7 2049.0 490.0 C2050.5 495.3 2050.5 506.3 2049.0 512.0 C2047.5 517.7 2040.8 526.0 2040.0 524.0 C2039.2 522.0 2044.0 507.3 2044.0 500.0 C2044.0 492.7 2039.2 481.7 2040.0 480.0Z" fill="#b9611f" />
</g>
<path d="M2006 500 Q2006 486 2020 482 Q2034 486 2034 500 Q2032 512 2021 515" fill="none" stroke="#050505" stroke-width="3.6" stroke-linecap="round"/>
<path d="M1991 488 Q1990 494 1994 499" fill="none" stroke="#050505" stroke-width="3.6" stroke-linecap="round"/>
<path d="M1965.0 500.0 C1966.5 498.7 1972.5 505.3 1975.0 507.0 C1977.5 508.7 1987.2 514.9 1990.0 517.0 C1992.8 519.1 2000.0 526.3 2003.0 528.0 C2006.0 529.7 2016.8 533.6 2020.0 534.0 C2023.2 534.4 2033.0 529.4 2035.0 532.0 C2037.0 534.6 2044.5 554.2 2040.0 560.0 C2035.5 565.8 1999.0 590.0 1990.0 590.0 C1981.0 590.0 1953.0 567.0 1950.0 560.0 C1947.0 553.0 1958.5 526.0 1960.0 520.0 C1961.5 514.0 1963.5 501.3 1965.0 500.0Z" fill="#050505" />
<path d="M1841 380 Q1840 372 1842 366" fill="none" stroke="#c2601a" stroke-width="2.2" stroke-linecap="round"/>
<path d="M1860 378 Q1868 362 1882 354" fill="none" stroke="#c2601a" stroke-width="2.2" stroke-linecap="round"/>
<path d="M1881 380 Q1905 356 1937 343" fill="none" stroke="#c2601a" stroke-width="2.2" stroke-linecap="round"/>
<path d="M1909 380 Q1940 360 1976 350" fill="none" stroke="#c2601a" stroke-width="2.2" stroke-linecap="round"/>
<path d="M1935 387 Q1975 372 2016 374" fill="none" stroke="#c2601a" stroke-width="2.2" stroke-linecap="round"/>
<path d="M1940 411 Q1980 400 2024 399" fill="none" stroke="#c2601a" stroke-width="2.2" stroke-linecap="round"/>
<path d="M1952 442 Q1990 428 2031 424" fill="none" stroke="#c2601a" stroke-width="2.2" stroke-linecap="round"/>
<path d="M1973 461 Q1995 460 2019 459" fill="none" stroke="#c2601a" stroke-width="2.2" stroke-linecap="round"/>
<path d="M2044 372 L2046 380 M2048 392 L2053 404" stroke="#c2601a" stroke-width="2.4" stroke-linecap="round"/>
<path d="M1868.0 421.0 C1868.2 418.5 1869.7 415.3 1872.0 414.0 C1874.3 412.7 1877.7 412.5 1882.0 413.0 C1886.3 413.5 1893.2 415.2 1898.0 417.0 C1902.8 418.8 1908.3 422.0 1911.0 424.0 C1913.7 426.0 1914.2 427.5 1914.0 429.0 C1913.8 430.5 1912.7 432.5 1910.0 433.0 C1907.3 433.5 1902.7 432.8 1898.0 432.0 C1893.3 431.2 1886.5 428.5 1882.0 428.0 C1877.5 427.5 1873.3 430.2 1871.0 429.0 C1868.7 427.8 1867.8 423.5 1868.0 421.0Z" fill="#050505" />
<path d="M1824.0 420.0 C1825.0 417.8 1829.0 416.7 1832.0 416.0 C1835.0 415.3 1839.7 415.2 1842.0 416.0 C1844.3 416.8 1846.0 419.3 1846.0 421.0 C1846.0 422.7 1844.3 424.8 1842.0 426.0 C1839.7 427.2 1834.7 427.5 1832.0 428.0 C1829.3 428.5 1827.3 430.3 1826.0 429.0 C1824.7 427.7 1823.0 422.2 1824.0 420.0Z" fill="#050505" />
<ellipse cx="1890.5" cy="471" rx="26" ry="27" fill="#bf7040" stroke="#050505" stroke-width="4"/>
<path d="M1866 462 Q1890 456 1915 464 Q1918 478 1908 490 Q1892 500 1874 491 Q1864 480 1866 462Z" fill="#e8ecee"/>
<path d="M1866 462 Q1890 456 1916 465" fill="none" stroke="#050505" stroke-width="4"/>
<ellipse cx="1887" cy="473.5" rx="14.8" ry="12.6" fill="#020202"/>
<path d="M1829.0 466.0 C1829.3 462.0 1831.8 459.0 1833.0 459.0 C1834.2 459.0 1835.7 462.8 1836.0 466.0 C1836.3 469.2 1835.8 475.2 1835.0 478.0 C1834.2 480.8 1832.0 485.0 1831.0 483.0 C1830.0 481.0 1828.7 470.0 1829.0 466.0Z" fill="#dcdcdc" stroke="#050505" stroke-width="2.5" stroke-linejoin="round" stroke-linecap="round" />
<path d="M1836 452 Q1842 458 1838 468" fill="none" stroke="#050505" stroke-width="3" stroke-linecap="round"/>
<path d="M1854 503 Q1863 512 1861 520 Q1857 528 1846 523" fill="none" stroke="#050505" stroke-width="4" stroke-linecap="round"/>
<path d="M1817 514 Q1822 523 1830 523 Q1838 526 1846 522" fill="none" stroke="#050505" stroke-width="3.4" stroke-linecap="round"/>
<path d="M1837.0 531.0 C1838.6 530.1 1850.5 533.5 1854.0 535.0 C1857.5 536.5 1868.9 543.9 1872.0 546.0 C1875.1 548.1 1881.7 554.7 1885.0 556.0 C1888.3 557.3 1900.5 559.6 1905.0 559.0 C1909.5 558.4 1925.6 552.1 1930.0 550.0 C1934.4 547.9 1945.9 541.0 1949.0 538.0 C1952.1 535.0 1959.3 523.8 1961.0 520.0 C1962.7 516.2 1964.6 500.0 1966.0 500.0 C1967.4 500.0 1975.6 510.0 1975.0 520.0 C1974.4 530.0 1968.2 589.8 1960.0 600.0 C1951.8 610.2 1903.0 619.4 1893.0 622.0 C1883.0 624.6 1865.3 626.0 1860.0 626.0 C1854.7 626.0 1843.0 625.8 1840.0 622.0 C1837.0 618.2 1827.4 591.3 1830.0 588.0 C1832.6 584.7 1862.2 590.1 1866.0 589.0 C1869.8 587.9 1867.9 579.9 1868.0 577.0 C1868.1 574.1 1868.0 562.4 1867.0 560.0 C1866.0 557.6 1860.1 554.2 1858.0 553.0 C1855.9 551.8 1848.0 548.9 1846.0 548.0 C1844.0 547.1 1838.9 545.7 1838.0 544.0 C1837.1 542.3 1835.4 531.9 1837.0 531.0Z" fill="#050505" />
<path d="M1821.0 533.0 C1821.5 531.0 1827.2 530.8 1829.0 532.0 C1830.8 533.2 1832.5 538.0 1832.0 540.0 C1831.5 542.0 1827.8 545.2 1826.0 544.0 C1824.2 542.8 1820.5 535.0 1821.0 533.0Z" fill="#050505" />
<path d="M1822.5 556.0 C1823.0 553.0 1828.8 550.3 1832.0 549.5 C1835.2 548.7 1838.7 551.0 1842.0 551.0 C1845.3 551.0 1848.2 548.4 1852.0 549.5 C1855.8 550.6 1863.3 554.5 1865.0 557.5 C1866.7 560.5 1865.2 564.8 1862.0 567.5 C1858.8 570.2 1851.0 573.5 1845.5 573.5 C1840.0 573.5 1832.8 570.4 1829.0 567.5 C1825.2 564.6 1822.0 559.0 1822.5 556.0Z" fill="#c26b4a" stroke="#050505" stroke-width="3" stroke-linejoin="round" stroke-linecap="round" />
<path d="M1824 557 Q1834 558 1845 562 Q1856 558 1864 558" fill="none" stroke="#140805" stroke-width="3" stroke-linecap="round"/>
<path d="M1830 565 Q1845 570 1860 565" fill="none" stroke="#d58060" stroke-width="1.6" opacity="0.7"/>
<g filter="url(#bl2)">
<path d="M1781.0 539.0 C1786.1 537.1 1801.2 535.6 1806.0 536.0 C1810.8 536.4 1819.9 539.2 1822.0 542.0 C1824.1 544.8 1823.3 554.4 1824.0 560.0 C1824.7 565.6 1826.4 582.5 1828.0 590.0 C1829.6 597.5 1836.4 615.8 1838.0 624.0 C1839.6 632.2 1846.4 655.8 1842.0 660.0 C1837.6 664.2 1807.1 662.3 1800.0 660.0 C1792.9 657.7 1784.3 644.1 1781.0 640.0 C1777.7 635.9 1774.3 629.9 1772.0 625.0 C1769.7 620.1 1762.8 604.6 1761.0 598.0 C1759.2 591.4 1756.9 573.4 1757.0 568.0 C1757.1 562.6 1759.2 555.4 1762.0 552.0 C1764.8 548.6 1775.9 540.9 1781.0 539.0Z" fill="#050505" />
</g>
<g>
<line x1="1970.60" y1="980.20" x2="1974.60" y2="980.20" stroke="#d8d400" stroke-width="1.3"/>
<line x1="1970.27" y1="982.68" x2="1974.14" y2="983.72" stroke="#d8d400" stroke-width="1.3"/>
<line x1="1969.31" y1="985.00" x2="1972.78" y2="987.00" stroke="#d8d400" stroke-width="1.3"/>
<line x1="1967.79" y1="986.99" x2="1970.62" y2="989.82" stroke="#d8d400" stroke-width="1.3"/>
<line x1="1965.80" y1="988.51" x2="1967.80" y2="991.98" stroke="#d8d400" stroke-width="1.3"/>
<line x1="1963.48" y1="989.47" x2="1964.52" y2="993.34" stroke="#d8d400" stroke-width="1.3"/>
<line x1="1961.00" y1="989.80" x2="1961.00" y2="993.80" stroke="#d8d400" stroke-width="1.3"/>
<line x1="1958.52" y1="989.47" x2="1957.48" y2="993.34" stroke="#d8d400" stroke-width="1.3"/>
<line x1="1956.20" y1="988.51" x2="1954.20" y2="991.98" stroke="#d8d400" stroke-width="1.3"/>
<line x1="1954.21" y1="986.99" x2="1951.38" y2="989.82" stroke="#d8d400" stroke-width="1.3"/>
<line x1="1952.69" y1="985.00" x2="1949.22" y2="987.00" stroke="#d8d400" stroke-width="1.3"/>
<line x1="1951.73" y1="982.68" x2="1947.86" y2="983.72" stroke="#d8d400" stroke-width="1.3"/>
<line x1="1951.40" y1="980.20" x2="1947.40" y2="980.20" stroke="#d8d400" stroke-width="1.3"/>
<line x1="1951.73" y1="977.72" x2="1947.86" y2="976.68" stroke="#d8d400" stroke-width="1.3"/>
<line x1="1952.69" y1="975.40" x2="1949.22" y2="973.40" stroke="#d8d400" stroke-width="1.3"/>
<line x1="1954.21" y1="973.41" x2="1951.38" y2="970.58" stroke="#d8d400" stroke-width="1.3"/>
<line x1="1956.20" y1="971.89" x2="1954.20" y2="968.42" stroke="#d8d400" stroke-width="1.3"/>
<line x1="1958.52" y1="970.93" x2="1957.48" y2="967.06" stroke="#d8d400" stroke-width="1.3"/>
<line x1="1961.00" y1="970.60" x2="1961.00" y2="966.60" stroke="#d8d400" stroke-width="1.3"/>
<line x1="1963.48" y1="970.93" x2="1964.52" y2="967.06" stroke="#d8d400" stroke-width="1.3"/>
<line x1="1965.80" y1="971.89" x2="1967.80" y2="968.42" stroke="#d8d400" stroke-width="1.3"/>
<line x1="1967.79" y1="973.41" x2="1970.62" y2="970.58" stroke="#d8d400" stroke-width="1.3"/>
<line x1="1969.31" y1="975.40" x2="1972.78" y2="973.40" stroke="#d8d400" stroke-width="1.3"/>
<line x1="1970.27" y1="977.72" x2="1974.14" y2="976.68" stroke="#d8d400" stroke-width="1.3"/>
<circle cx="1961" cy="980.2" r="15" fill="none" stroke="#1a1a10" stroke-width="1.2" opacity="0.6"/>
<circle cx="1961" cy="980.2" r="6.4" fill="#f0ee00"/>
<text x="1961" y="1015.8" text-anchor="middle" font-family="Liberation Sans, sans-serif" font-size="17" font-weight="bold" fill="#dcd818" stroke="#1a1a08" stroke-width="0.6" paint-order="stroke" textLength="41" lengthAdjust="spacingAndGlyphs">origin</text>
</g>
<circle cx="2206.5" cy="471.5" r="1.6" fill="#3a3a3a"/><circle cx="2398" cy="470" r="1.2" fill="#555"/></svg>
<svg style="position:absolute;left:1328px;top:1866px;" width="8.5" height="14.5" viewBox="0 0 8.5 14.5"><path d="M1.2 1.2 L7.0 7.25 L1.2 13.3" fill="none" stroke="#b5b5b5" stroke-width="2.4" stroke-linecap="round" stroke-linejoin="round"/></svg>
<svg style="position:absolute;left:1353.5px;top:1859.5px;" width="27" height="26.5" viewBox="0 0 27 26.5"><path d="M13.5 1 Q14.6 1 15.2 2 L26.6 24 Q27.4 26.5 25 26.5 H2 Q-0.4 26.5 0.4 24 L11.8 2 Q12.4 1 13.5 1Z" fill="#b4b4b4"/><rect x="12" y="8.5" width="3" height="9.5" rx="1.2" fill="#232323"/><circle cx="13.5" cy="21.7" r="1.9" fill="#232323"/></svg>
<div style="position:absolute;left:1400.3px;top:1854px;width:1.5px;height:36px;background:#3a3a3a;"></div>
<svg style="position:absolute;left:0;top:0;pointer-events:none" width="3358" height="1920" viewBox="0 0 3358 1920"><path d="M1434.3 1857.7 L1450.7 1862.4 L1452.4 1876.2 L1437.3 1887.5 L1422.2 1873.2Z M1442 1872.8 L1434.3 1857.7 M1442 1872.8 L1450.7 1862.4 M1442 1872.8 L1452.4 1876.2 M1442 1872.8 L1437.3 1887.5 M1442 1872.8 L1422.2 1873.2" fill="none" stroke="#b2b2b2" stroke-width="1.9" stroke-linejoin="round"/><path d="M1482.2 1857.7 L1498.6 1862.8 L1500.4 1876.2 L1485.3 1887.5 L1470.1 1873.2Z" fill="none" stroke="#3b86dc" stroke-width="2.4" stroke-linejoin="miter"/></svg>
<svg style="position:absolute;left:1783.5px;top:1858px;" width="24.5" height="33" viewBox="0 0 24.5 33"><path d="M0.5 0 L24.5 20.8 L10.8 22.4 L0.5 33Z" fill="#3b8ce6"/></svg>
<svg style="position:absolute;left:1829.5px;top:1856px;" width="31.5" height="33" viewBox="0 0 31.5 33"><path d="M9.2 32.5 Q4 28 1 20 Q-0.5 16.8 1.6 15.8 Q3.6 15 5 17.6 L7.6 21.6 L4.6 8 Q4 5 6 4.4 Q8.2 4 9 7 L11.4 15.6 L10.6 3.6 Q10.6 0.6 12.8 0.5 Q15 0.5 15.3 3.5 L16.2 15 L18.2 4.6 Q18.8 1.8 20.9 2.2 Q23 2.7 22.6 5.6 L21.2 16.6 L25 9.4 Q26.4 6.9 28.3 7.9 Q30 9 28.9 11.6 L25 21.5 Q24 27 20.8 32.5Z" fill="#b4b4b4"/></svg>
<svg style="position:absolute;left:1881.4px;top:1858px;" width="33.5" height="31.5" viewBox="0 0 33.5 31.5"><circle cx="12.4" cy="12.4" r="10.6" fill="none" stroke="#b4b4b4" stroke-width="3"/><path d="M20.6 20.4 L31.5 29.8" stroke="#b4b4b4" stroke-width="4.2" stroke-linecap="round"/></svg>
<div style="position:absolute;left:1936.3px;top:1855px;width:1.5px;height:36px;background:#3a3a3a;"></div>
<svg style="position:absolute;left:1959px;top:1858px;" width="31" height="31" viewBox="0 0 31 31"><circle cx="15.5" cy="15.5" r="13.8" fill="none" stroke="#b4b4b4" stroke-width="3"/><circle cx="15.5" cy="15.5" r="6.6" fill="#b4b4b4"/></svg>
<svg style="position:absolute;left:2010px;top:1858px;" width="31" height="31" viewBox="0 0 31 31"><path d="M2 29 L29 2" stroke="#b4b4b4" stroke-width="3.4" stroke-linecap="round"/><circle cx="15.5" cy="15.5" r="6.2" fill="#232323" stroke="#b4b4b4" stroke-width="2.4"/><circle cx="15.5" cy="15.5" r="1.8" fill="#b4b4b4"/></svg>
<svg style="position:absolute;left:0;top:0;pointer-events:none" width="3358" height="1920" viewBox="0 0 3358 1920"><g transform="translate(2075 1872.5) rotate(45)" fill="#b2b2b2"><rect x="-7.2" y="-17" width="14.4" height="4.6" rx="1.6"/><rect x="-4.6" y="-13" width="9.2" height="9.5"/><path d="M-4.6 -4 Q-6 0 -10 2.6 Q-10.5 4.6 -8.5 4.6 H8.5 Q10.5 4.6 10 2.6 Q6 0 4.6 -4Z"/><path d="M-1.5 4.4 L0 19.5 L1.5 4.4Z"/></g></svg>
<svg style="position:absolute;left:0;top:0;pointer-events:none" width="3358" height="1920" viewBox="0 0 3358 1920"><g transform="translate(2129.8 1872.5)" fill="#b2b2b2"><path d="M0 -16.5 L6.6 -8 H-6.6Z M0 16.5 L6.6 8 H-6.6Z M-16.5 0 L-8 -6.6 V6.6Z M16.5 0 L8 -6.6 V6.6Z"/><circle r="10.6" fill="#232323"/><circle r="6.9"/></g></svg>
<svg style="position:absolute;left:2166.4px;top:1857px;" width="34.5" height="31" viewBox="0 0 34.5 31"><circle cx="7" cy="24" r="6.8" fill="#b4b4b4"/><path d="M9 22.5 Q26 19 32.8 1.5" fill="none" stroke="#b4b4b4" stroke-width="3.4" stroke-linecap="round"/></svg>
<svg style="position:absolute;left:2479px;top:1858px;" width="35.5" height="28.5" viewBox="0 0 35.5 28.5"><rect width="35.5" height="28.5" fill="#9a9a9a"/><rect x="1.4" y="1.4" width="6.6" height="6.5" fill="#8c8c8c"/><rect x="7.9" y="1.4" width="6.6" height="6.5" fill="#5c5c5c"/><rect x="14.4" y="1.4" width="6.6" height="6.5" fill="#8c8c8c"/><rect x="20.9" y="1.4" width="6.6" height="6.5" fill="#5c5c5c"/><rect x="27.4" y="1.4" width="6.6" height="6.5" fill="#8c8c8c"/><rect x="1.4" y="7.800000000000001" width="6.6" height="6.5" fill="#5c5c5c"/><rect x="7.9" y="7.800000000000001" width="6.6" height="6.5" fill="#8c8c8c"/><rect x="14.4" y="7.800000000000001" width="6.6" height="6.5" fill="#5c5c5c"/><rect x="20.9" y="7.800000000000001" width="6.6" height="6.5" fill="#8c8c8c"/><rect x="27.4" y="7.800000000000001" width="6.6" height="6.5" fill="#5c5c5c"/><rect x="1.4" y="14.200000000000001" width="6.6" height="6.5" fill="#8c8c8c"/><rect x="7.9" y="14.200000000000001" width="6.6" height="6.5" fill="#5c5c5c"/><rect x="14.4" y="14.200000000000001" width="6.6" height="6.5" fill="#8c8c8c"/><rect x="20.9" y="14.200000000000001" width="6.6" height="6.5" fill="#5c5c5c"/><rect x="27.4" y="14.200000000000001" width="6.6" height="6.5" fill="#8c8c8c"/><rect x="1.4" y="20.6" width="6.6" height="6.5" fill="#5c5c5c"/><rect x="7.9" y="20.6" width="6.6" height="6.5" fill="#8c8c8c"/><rect x="14.4" y="20.6" width="6.6" height="6.5" fill="#5c5c5c"/><rect x="20.9" y="20.6" width="6.6" height="6.5" fill="#8c8c8c"/><rect x="27.4" y="20.6" width="6.6" height="6.5" fill="#5c5c5c"/></svg>
<div style="position:absolute;left:2615px;top:1853.5px;width:38px;height:38px;background:#1d1d1d;border-radius:5px;box-shadow:0 0 0 1.5px #323232;"></div>
<svg style="position:absolute;left:2626.8px;top:1868.5px;" width="15" height="8.6" viewBox="0 0 15 8.6"><path d="M1.2 1.2 L7.5 7.1 L13.8 1.2" fill="none" stroke="#d0d0d0" stroke-width="2.4" stroke-linecap="round" stroke-linejoin="round"/></svg>
<div style="position:absolute;left:2678px;top:124px;width:8.5px;height:1784px;background:#161616;"></div>
<div style="position:absolute;left:2686.5px;top:124px;width:671.5px;height:1783px;background:#232323;"></div>
<svg style="position:absolute;left:2831.7px;top:146px;" width="16.5" height="14" viewBox="0 0 16.5 14"><rect x="0" y="0" width="16.5" height="2.2" fill="#cfcfcf"/><rect x="0" y="5.9" width="16.5" height="2.2" fill="#cfcfcf"/><rect x="0" y="11.8" width="16.5" height="2.2" fill="#cfcfcf"/></svg>
<svg style="position:absolute;left:2707px;top:198px;" width="17.5" height="24.2" viewBox="0 0 17.5 24.2"><circle cx="8.75" cy="4.598" r="4.598" fill="#b9b9b9"/><path d="M7.15 10.164 H10.35 L17.5 22.2 Q17.5 24.2 15.5 24.2 H2 Q0 24.2 0 22.2Z" fill="#b9b9b9"/></svg>
<div style="position:absolute;left:2699px;top:237.5px;width:620px;height:37px;background:#151515;border-radius:5px;box-shadow:0 0 0 1.5px #2e2e2e;"></div>
<svg style="position:absolute;left:2710.5px;top:245.0px;" width="23.5" height="22.5" viewBox="0 0 23.5 22.5"><circle cx="14.6" cy="8.8" r="7.3" fill="none" stroke="#c4c4c4" stroke-width="2.7"/><path d="M9.3 14 L1.6 21" stroke="#c4c4c4" stroke-width="3.6" stroke-linecap="round"/></svg>
<div style="position:absolute;left:3330px;top:181px;width:28px;height:1727px;background:#2b2b2b;"></div>
<div style="position:absolute;left:3332.5px;top:181.5px;width:20px;height:1442px;background:#353535;border-radius:10px;"></div>
<div style="position:absolute;left:2687.5px;top:280px;width:642.5px;height:36.5px;background:#3b3b3b;"></div>
<div style="position:absolute;left:2687.5px;top:280px;width:642.5px;height:1.5px;background:#454545;"></div>
<svg style="position:absolute;left:2698px;top:293.2px;" width="14.5" height="8.6" viewBox="0 0 14.5 8.6"><path d="M1.2 1.2 L7.25 7.1 L13.3 1.2" fill="none" stroke="#c8c8c8" stroke-width="2.4" stroke-linecap="round" stroke-linejoin="round"/></svg>
<div style="position:absolute;left:3204px;top:376px;width:28.5px;height:28px;background:#a9a9a9;border-radius:4.5px;"></div>
<svg style="position:absolute;left:3204px;top:376px;" width="28.5" height="28" viewBox="0 0 28.5 28"><path d="M6.5 14.5 L12 20.5 L22.5 8" fill="none" stroke="#232323" stroke-width="3.6" stroke-linejoin="miter"/></svg>
<div style="position:absolute;left:2687.5px;top:422px;width:642.5px;height:37px;background:#3b3b3b;"></div>
<div style="position:absolute;left:2687.5px;top:422px;width:642.5px;height:1.5px;background:#454545;"></div>
<svg style="position:absolute;left:2698px;top:435.2px;" width="14.5" height="8.6" viewBox="0 0 14.5 8.6"><path d="M1.2 1.2 L7.25 7.1 L13.3 1.2" fill="none" stroke="#c8c8c8" stroke-width="2.4" stroke-linecap="round" stroke-linejoin="round"/></svg>
<div style="position:absolute;left:3020.5px;top:471.5px;width:210.5px;height:37px;background:#1c1c1c;border-radius:5px;box-shadow:0 0 0 1.6px #343434;"></div>
<svg style="position:absolute;left:3205px;top:485.8px;" width="15" height="8.6" viewBox="0 0 15 8.6"><path d="M1.2 1.2 L7.5 7.1 L13.8 1.2" fill="none" stroke="#d8d8d8" stroke-width="2.4" stroke-linecap="round" stroke-linejoin="round"/></svg>
<div style="position:absolute;left:3081.5px;top:555.5px;width:149.5px;height:37.5px;background:#1c1c1c;border-radius:5px;box-shadow:0 0 0 1.6px #343434;"></div>
<svg style="position:absolute;left:3205px;top:570.05px;" width="15" height="8.6" viewBox="0 0 15 8.6"><path d="M1.2 1.2 L7.5 7.1 L13.8 1.2" fill="none" stroke="#d8d8d8" stroke-width="2.4" stroke-linecap="round" stroke-linejoin="round"/></svg>
<div style="position:absolute;left:2687.5px;top:648px;width:642.5px;height:37.5px;background:#3b3b3b;"></div>
<div style="position:absolute;left:2687.5px;top:648px;width:642.5px;height:1.5px;background:#454545;"></div>
<svg style="position:absolute;left:2698px;top:661.2px;" width="14.5" height="8.6" viewBox="0 0 14.5 8.6"><path d="M1.2 1.2 L7.25 7.1 L13.3 1.2" fill="none" stroke="#c8c8c8" stroke-width="2.4" stroke-linecap="round" stroke-linejoin="round"/></svg>
<svg style="position:absolute;left:3212.7px;top:656.5px;" width="18.7" height="19" viewBox="0 0 18.7 19"><path d="M7.6 0 H11.1 V7.7 H18.7 V11.3 H11.1 V19 H7.6 V11.3 H0 V7.7 H7.6Z" fill="#d0d0d0"/></svg>
<svg style="position:absolute;left:2697.3px;top:710.8px;" width="8.8" height="15.5" viewBox="0 0 8.8 15.5"><path d="M1.2 1.2 L7.300000000000001 7.75 L1.2 14.3" fill="none" stroke="#c8c8c8" stroke-width="2.4" stroke-linecap="round" stroke-linejoin="round"/></svg>
<svg style="position:absolute;left:3213.6px;top:713.7px;" width="17" height="14" viewBox="0 0 17 14"><rect x="0" y="0" width="17" height="2.2" fill="#cfcfcf"/><rect x="0" y="5.9" width="17" height="2.2" fill="#cfcfcf"/><rect x="0" y="11.8" width="17" height="2.2" fill="#cfcfcf"/></svg>
<div style="position:absolute;left:2687.5px;top:753.7px;width:543px;height:2px;background:#181818;"></div>
<svg style="position:absolute;left:2697.3px;top:781.1999999999999px;" width="8.8" height="15.5" viewBox="0 0 8.8 15.5"><path d="M1.2 1.2 L7.300000000000001 7.75 L1.2 14.3" fill="none" stroke="#c8c8c8" stroke-width="2.4" stroke-linecap="round" stroke-linejoin="round"/></svg>
<svg style="position:absolute;left:3213.6px;top:784.1px;" width="17" height="14" viewBox="0 0 17 14"><rect x="0" y="0" width="17" height="2.2" fill="#cfcfcf"/><rect x="0" y="5.9" width="17" height="2.2" fill="#cfcfcf"/><rect x="0" y="11.8" width="17" height="2.2" fill="#cfcfcf"/></svg>
<div style="position:absolute;left:2687.5px;top:824.1px;width:543px;height:2px;background:#181818;"></div>
<svg style="position:absolute;left:2697.3px;top:851.0999999999999px;" width="8.8" height="15.5" viewBox="0 0 8.8 15.5"><path d="M1.2 1.2 L7.300000000000001 7.75 L1.2 14.3" fill="none" stroke="#c8c8c8" stroke-width="2.4" stroke-linecap="round" stroke-linejoin="round"/></svg>
<svg style="position:absolute;left:3213.6px;top:854.0px;" width="17" height="14" viewBox="0 0 17 14"><rect x="0" y="0" width="17" height="2.2" fill="#cfcfcf"/><rect x="0" y="5.9" width="17" height="2.2" fill="#cfcfcf"/><rect x="0" y="11.8" width="17" height="2.2" fill="#cfcfcf"/></svg>
<div style="position:absolute;left:2687.5px;top:894.0px;width:543px;height:2px;background:#181818;"></div>
<svg style="position:absolute;left:2697.3px;top:921.0999999999999px;" width="8.8" height="15.5" viewBox="0 0 8.8 15.5"><path d="M1.2 1.2 L7.300000000000001 7.75 L1.2 14.3" fill="none" stroke="#c8c8c8" stroke-width="2.4" stroke-linecap="round" stroke-linejoin="round"/></svg>
<svg style="position:absolute;left:3213.6px;top:924.0px;" width="17" height="14" viewBox="0 0 17 14"><rect x="0" y="0" width="17" height="2.2" fill="#cfcfcf"/><rect x="0" y="5.9" width="17" height="2.2" fill="#cfcfcf"/><rect x="0" y="11.8" width="17" height="2.2" fill="#cfcfcf"/></svg>
<div style="position:absolute;left:2687.5px;top:964.0px;width:543px;height:2px;background:#181818;"></div>
<svg style="position:absolute;left:2697.3px;top:991.0px;" width="8.8" height="15.5" viewBox="0 0 8.8 15.5"><path d="M1.2 1.2 L7.300000000000001 7.75 L1.2 14.3" fill="none" stroke="#c8c8c8" stroke-width="2.4" stroke-linecap="round" stroke-linejoin="round"/></svg>
<svg style="position:absolute;left:3213.6px;top:993.9000000000001px;" width="17" height="14" viewBox="0 0 17 14"><rect x="0" y="0" width="17" height="2.2" fill="#cfcfcf"/><rect x="0" y="5.9" width="17" height="2.2" fill="#cfcfcf"/><rect x="0" y="11.8" width="17" height="2.2" fill="#cfcfcf"/></svg>
<div style="position:absolute;left:2687.5px;top:1033.9px;width:543px;height:2px;background:#181818;"></div>
<svg style="position:absolute;left:2697.3px;top:1061.0px;" width="8.8" height="15.5" viewBox="0 0 8.8 15.5"><path d="M1.2 1.2 L7.300000000000001 7.75 L1.2 14.3" fill="none" stroke="#c8c8c8" stroke-width="2.4" stroke-linecap="round" stroke-linejoin="round"/></svg>
<svg style="position:absolute;left:3213.6px;top:1063.9px;" width="17" height="14" viewBox="0 0 17 14"><rect x="0" y="0" width="17" height="2.2" fill="#cfcfcf"/><rect x="0" y="5.9" width="17" height="2.2" fill="#cfcfcf"/><rect x="0" y="11.8" width="17" height="2.2" fill="#cfcfcf"/></svg>
<div style="position:absolute;left:2687.5px;top:1103.9px;width:543px;height:2px;background:#181818;"></div>
<svg style="position:absolute;left:2697.5px;top:1133.0px;" width="14.5" height="8.6" viewBox="0 0 14.5 8.6"><path d="M1.2 1.2 L7.25 7.1 L13.3 1.2" fill="none" stroke="#c8c8c8" stroke-width="2.4" stroke-linecap="round" stroke-linejoin="round"/></svg>
<svg style="position:absolute;left:3213.6px;top:1134.2px;" width="17" height="14" viewBox="0 0 17 14"><rect x="0" y="0" width="17" height="2.2" fill="#cfcfcf"/><rect x="0" y="5.9" width="17" height="2.2" fill="#cfcfcf"/><rect x="0" y="11.8" width="17" height="2.2" fill="#cfcfcf"/></svg>
<svg style="position:absolute;left:2697.3px;top:1589.2px;" width="8.8" height="15.5" viewBox="0 0 8.8 15.5"><path d="M1.2 1.2 L7.300000000000001 7.75 L1.2 14.3" fill="none" stroke="#c8c8c8" stroke-width="2.4" stroke-linecap="round" stroke-linejoin="round"/></svg>
<svg style="position:absolute;left:3213.6px;top:1592.1000000000001px;" width="17" height="14" viewBox="0 0 17 14"><rect x="0" y="0" width="17" height="2.2" fill="#cfcfcf"/><rect x="0" y="5.9" width="17" height="2.2" fill="#cfcfcf"/><rect x="0" y="11.8" width="17" height="2.2" fill="#cfcfcf"/></svg>
<div style="position:absolute;left:2687.5px;top:1632.1000000000001px;width:543px;height:2px;background:#181818;"></div>
<svg style="position:absolute;left:2697.3px;top:1659.6px;" width="8.8" height="15.5" viewBox="0 0 8.8 15.5"><path d="M1.2 1.2 L7.300000000000001 7.75 L1.2 14.3" fill="none" stroke="#c8c8c8" stroke-width="2.4" stroke-linecap="round" stroke-linejoin="round"/></svg>
<svg style="position:absolute;left:3213.6px;top:1662.5px;" width="17" height="14" viewBox="0 0 17 14"><rect x="0" y="0" width="17" height="2.2" fill="#cfcfcf"/><rect x="0" y="5.9" width="17" height="2.2" fill="#cfcfcf"/><rect x="0" y="11.8" width="17" height="2.2" fill="#cfcfcf"/></svg>
<div style="position:absolute;left:2687.5px;top:1702.5px;width:543px;height:2px;background:#181818;"></div>
<svg style="position:absolute;left:2697.3px;top:1729.8px;" width="8.8" height="15.5" viewBox="0 0 8.8 15.5"><path d="M1.2 1.2 L7.300000000000001 7.75 L1.2 14.3" fill="none" stroke="#c8c8c8" stroke-width="2.4" stroke-linecap="round" stroke-linejoin="round"/></svg>
<svg style="position:absolute;left:3213.6px;top:1732.7px;" width="17" height="14" viewBox="0 0 17 14"><rect x="0" y="0" width="17" height="2.2" fill="#cfcfcf"/><rect x="0" y="5.9" width="17" height="2.2" fill="#cfcfcf"/><rect x="0" y="11.8" width="17" height="2.2" fill="#cfcfcf"/></svg>
<div style="position:absolute;left:2687.5px;top:1772.7px;width:543px;height:2px;background:#181818;"></div>
<svg style="position:absolute;left:2697.3px;top:1799.2px;" width="8.8" height="15.5" viewBox="0 0 8.8 15.5"><path d="M1.2 1.2 L7.300000000000001 7.75 L1.2 14.3" fill="none" stroke="#c8c8c8" stroke-width="2.4" stroke-linecap="round" stroke-linejoin="round"/></svg>
<svg style="position:absolute;left:3213.6px;top:1802.1000000000001px;" width="17" height="14" viewBox="0 0 17 14"><rect x="0" y="0" width="17" height="2.2" fill="#cfcfcf"/><rect x="0" y="5.9" width="17" height="2.2" fill="#cfcfcf"/><rect x="0" y="11.8" width="17" height="2.2" fill="#cfcfcf"/></svg>
<div style="position:absolute;left:2687.5px;top:1842.1000000000001px;width:543px;height:2px;background:#181818;"></div>
<svg style="position:absolute;left:2697.3px;top:1869.7px;" width="8.8" height="15.5" viewBox="0 0 8.8 15.5"><path d="M1.2 1.2 L7.300000000000001 7.75 L1.2 14.3" fill="none" stroke="#c8c8c8" stroke-width="2.4" stroke-linecap="round" stroke-linejoin="round"/></svg>
<svg style="position:absolute;left:3213.6px;top:1872.6000000000001px;" width="17" height="14" viewBox="0 0 17 14"><rect x="0" y="0" width="17" height="2.2" fill="#cfcfcf"/><rect x="0" y="5.9" width="17" height="2.2" fill="#cfcfcf"/><rect x="0" y="11.8" width="17" height="2.2" fill="#cfcfcf"/></svg>
<div style="position:absolute;left:2687.5px;top:1561px;width:543px;height:2px;background:#181818;"></div>
<div style="position:absolute;left:3022.5px;top:1165.5px;width:208.5px;height:37.5px;background:#1c1c1c;border-radius:5px;box-shadow:0 0 0 1.6px #343434;"></div>
<svg style="position:absolute;left:3205px;top:1180.05px;" width="15" height="8.6" viewBox="0 0 15 8.6"><path d="M1.2 1.2 L7.5 7.1 L13.8 1.2" fill="none" stroke="#d8d8d8" stroke-width="2.4" stroke-linecap="round" stroke-linejoin="round"/></svg>
<svg style="position:absolute;left:3253.3px;top:1177.5px;" width="16" height="16" viewBox="0 0 16 16"><path d="M1.6 1.6 L14.4 14.4 M14.4 1.6 L1.6 14.4" stroke="#d8d8d8" stroke-width="3.4" stroke-linecap="butt"/></svg>
<svg style="position:absolute;left:2731.2px;top:1217.7px;" width="8.4" height="15" viewBox="0 0 8.4 15"><path d="M1.2 1.2 L6.9 7.5 L1.2 13.8" fill="none" stroke="#b5b5b5" stroke-width="2.4" stroke-linecap="round" stroke-linejoin="round"/></svg>
<svg style="position:absolute;left:2731.2px;top:1259.55px;" width="8.4" height="15" viewBox="0 0 8.4 15"><path d="M1.2 1.2 L6.9 7.5 L1.2 13.8" fill="none" stroke="#b5b5b5" stroke-width="2.4" stroke-linecap="round" stroke-linejoin="round"/></svg>
<svg style="position:absolute;left:2731.2px;top:1301.4px;" width="8.4" height="15" viewBox="0 0 8.4 15"><path d="M1.2 1.2 L6.9 7.5 L1.2 13.8" fill="none" stroke="#b5b5b5" stroke-width="2.4" stroke-linecap="round" stroke-linejoin="round"/></svg>
<svg style="position:absolute;left:2731.2px;top:1343.25px;" width="8.4" height="15" viewBox="0 0 8.4 15"><path d="M1.2 1.2 L6.9 7.5 L1.2 13.8" fill="none" stroke="#b5b5b5" stroke-width="2.4" stroke-linecap="round" stroke-linejoin="round"/></svg>
<svg style="position:absolute;left:2731.2px;top:1385.1000000000001px;" width="8.4" height="15" viewBox="0 0 8.4 15"><path d="M1.2 1.2 L6.9 7.5 L1.2 13.8" fill="none" stroke="#b5b5b5" stroke-width="2.4" stroke-linecap="round" stroke-linejoin="round"/></svg>
<svg style="position:absolute;left:2731.2px;top:1426.95px;" width="8.4" height="15" viewBox="0 0 8.4 15"><path d="M1.2 1.2 L6.9 7.5 L1.2 13.8" fill="none" stroke="#b5b5b5" stroke-width="2.4" stroke-linecap="round" stroke-linejoin="round"/></svg>
<svg style="position:absolute;left:2731.2px;top:1468.8px;" width="8.4" height="15" viewBox="0 0 8.4 15"><path d="M1.2 1.2 L6.9 7.5 L1.2 13.8" fill="none" stroke="#b5b5b5" stroke-width="2.4" stroke-linecap="round" stroke-linejoin="round"/></svg>
<svg style="position:absolute;left:3253px;top:1512.8px;" width="16" height="16" viewBox="0 0 16 16"><path d="M1.6 1.6 L14.4 14.4 M14.4 1.6 L1.6 14.4" stroke="#d8d8d8" stroke-width="3.4" stroke-linecap="butt"/></svg>
<div style="position:absolute;left:2688px;top:1900px;width:642px;height:6px;background:#3a3a3a;"></div>
<span class="t" id="t0" style="left:1507.24px;top:10.39px;font-size:22.6px;line-height:22.6px;color:#3d3a3d;letter-spacing:0.611px;">Adobe Character Animator 2022</span>
<span class="t" id="t1" style="left:117.02px;top:73.50px;font-size:28px;line-height:28px;color:#f2f2f2;letter-spacing:-1.778px;">Rig</span>
<span class="t" id="t2" style="left:195.12px;top:73.50px;font-size:28px;line-height:28px;color:#9a9a9a;letter-spacing:-1.781px;">Record</span>
<span class="t" id="t3" style="left:320.12px;top:73.50px;font-size:28px;line-height:28px;color:#9a9a9a;letter-spacing:-1.398px;">Stream</span>
<span class="t" id="t4" style="left:1610.05px;top:72.77px;font-size:25.8px;line-height:25.8px;color:#8a8a8a;letter-spacing:-1.223px;">SMR VIDEO</span>
<span class="t" id="t5" style="left:23.00px;top:141.40px;font-size:23.3px;line-height:23.3px;color:#dedede;letter-spacing:-0.187px;">Project</span>
<span class="t" id="t6" style="left:173.60px;top:141.40px;font-size:23.3px;line-height:23.3px;color:#9a9a9a;letter-spacing:-0.115px;">History</span>
<span class="t" id="t7" style="left:11.64px;top:233.49px;font-size:22.6px;line-height:22.6px;color:#9a9a9a;letter-spacing:-0.190px;">Name</span>
<span class="t" id="t8" style="left:494.34px;top:233.49px;font-size:22.6px;line-height:22.6px;color:#9a9a9a;letter-spacing:-0.324px;">Type</span>
<span class="t" id="t9" style="left:91.60px;top:272.60px;font-size:23.3px;line-height:23.3px;color:#9a9a9a;letter-spacing:-0.690px;">Ninja shareables</span>
<span class="t" id="t10" style="left:496.60px;top:272.60px;font-size:23.3px;line-height:23.3px;color:#9a9a9a;letter-spacing:-0.290px;">Folder</span>
<span class="t" id="t11" style="left:91.60px;top:310.70px;font-size:23.3px;line-height:23.3px;color:#9a9a9a;letter-spacing:-0.939px;">Recordings</span>
<span class="t" id="t12" style="left:496.60px;top:310.70px;font-size:23.3px;line-height:23.3px;color:#9a9a9a;letter-spacing:-0.290px;">Folder</span>
<span class="t" id="t13" style="left:91.60px;top:348.80px;font-size:23.3px;line-height:23.3px;color:#9a9a9a;letter-spacing:-1.663px;">MM PUPPET</span>
<span class="t" id="t14" style="left:496.60px;top:348.80px;font-size:23.3px;line-height:23.3px;color:#9a9a9a;letter-spacing:-0.450px;">Puppet</span>
<span class="t" id="t15" style="left:91.60px;top:386.90px;font-size:23.3px;line-height:23.3px;color:#9a9a9a;letter-spacing:-0.074px;">Ninja</span>
<span class="t" id="t16" style="left:496.60px;top:386.90px;font-size:23.3px;line-height:23.3px;color:#9a9a9a;letter-spacing:-0.450px;">Puppet</span>
<span class="t" id="t17" style="left:111.83px;top:440.67px;font-size:17.8px;line-height:17.8px;color:#262626;font-weight:bold;letter-spacing:-0.014px;">Ps</span>
<span class="t" id="t18" style="left:23.50px;top:499.50px;font-size:23.3px;line-height:23.3px;color:#dedede;letter-spacing:-0.897px;">Triggers</span>
<span class="t" id="t19" style="left:180.90px;top:499.50px;font-size:23.3px;line-height:23.3px;color:#9a9a9a;letter-spacing:-0.393px;">Controls</span>
<span class="t" id="t20" style="left:75.50px;top:563.10px;font-size:23.3px;line-height:23.3px;color:#dedede;letter-spacing:-1.588px;">MM PUPPET</span>
<span class="t" id="t21" style="left:167.60px;top:664.89px;font-size:23.3px;line-height:23.3px;color:#e28c22;letter-spacing:-0.203px;">right hand</span>
<span class="t" id="t22" style="left:167.60px;top:703.04px;font-size:23.3px;line-height:23.3px;color:#e28c22;letter-spacing:-0.199px;">left hand</span>
<span class="t" id="t23" style="left:731.30px;top:141.80px;font-size:23.3px;line-height:23.3px;color:#dedede;letter-spacing:-0.369px;">Puppet:</span>
<span class="t" id="t24" style="left:813.50px;top:141.80px;font-size:23.3px;line-height:23.3px;color:#3d92ea;letter-spacing:-1.625px;">MM PUPPET</span>
<span class="t" id="t25" style="left:761.31px;top:238.02px;font-size:24.8px;line-height:24.8px;color:#9c9c9c;letter-spacing:-1.406px;">MM PUPPET</span>
<span class="t" id="t26" style="left:956.21px;top:238.02px;font-size:24.8px;line-height:24.8px;color:#9c9c9c;letter-spacing:-0.318px;">12</span>
<span class="t" id="t27" style="left:805.40px;top:285.60px;font-size:23.3px;line-height:23.3px;color:#dedede;letter-spacing:-0.753px;">Name</span>
<span class="t" id="t28" style="left:837.60px;top:325.60px;font-size:23.3px;line-height:23.3px;color:#9a9a9a;letter-spacing:0.968px;">MM</span>
<span class="t" id="t29" style="left:883.40px;top:363.40px;font-size:23.3px;line-height:23.3px;color:#9a9a9a;letter-spacing:-0.434px;">Right Profile</span>
<span class="t" id="t30" style="left:883.40px;top:401.50px;font-size:23.3px;line-height:23.3px;color:#9a9a9a;letter-spacing:-0.404px;">Right Quarter</span>
<span class="t" id="t31" style="left:883.40px;top:439.40px;font-size:23.3px;line-height:23.3px;color:#9a9a9a;letter-spacing:-0.187px;">Frontal</span>
<span class="t" id="t32" style="left:883.40px;top:477.50px;font-size:23.3px;line-height:23.3px;color:#9a9a9a;letter-spacing:-0.392px;">Left Quarter</span>
<span class="t" id="t33" style="left:883.40px;top:515.39px;font-size:23.3px;line-height:23.3px;color:#9a9a9a;letter-spacing:-0.334px;">Left Profile</span>
<span class="t" id="t34" style="left:2565.60px;top:1861.49px;font-size:23.3px;line-height:23.3px;color:#3d92ea;letter-spacing:-0.922px;">78%</span>
<span class="t" id="t35" style="left:2709.40px;top:141.50px;font-size:23.3px;line-height:23.3px;color:#b4b4b4;letter-spacing:-0.410px;">Properties</span>
<span class="t" id="t36" style="left:2747.56px;top:200.80px;font-size:24px;line-height:24px;color:#f0f0f0;letter-spacing:-0.851px;">MM PUPPET</span>
<span class="t" id="t37" style="left:2727.30px;top:287.10px;font-size:23.3px;line-height:23.3px;color:#e2e2e2;letter-spacing:-0.470px;">Puppet</span>
<span class="t" id="t38" style="left:2763.60px;top:336.80px;font-size:23.3px;line-height:23.3px;color:#3d92ea;letter-spacing:-0.592px;">/Users/mm/Downloads/MM PUPPET.psd</span>
<span class="t" id="t39" style="left:2763.60px;top:380.80px;font-size:23.3px;line-height:23.3px;color:#9a9a9a;letter-spacing:-0.064px;">Auto-sync with Artwork</span>
<span class="t" id="t40" style="left:2727.30px;top:428.89px;font-size:23.3px;line-height:23.3px;color:#e2e2e2;letter-spacing:-0.659px;">Puppet Mesh</span>
<span class="t" id="t41" style="left:2763.60px;top:480.19px;font-size:23.3px;line-height:23.3px;color:#9a9a9a;letter-spacing:-1.168px;">Mesh Shape</span>
<span class="t" id="t42" style="left:3032.20px;top:478.50px;font-size:23.3px;line-height:23.3px;color:#dedede;letter-spacing:-0.282px;">Contour</span>
<span class="t" id="t43" style="left:2763.60px;top:523.10px;font-size:23.3px;line-height:23.3px;color:#9a9a9a;letter-spacing:-0.580px;">Mesh Island Connection Width</span>
<span class="t" id="t44" style="left:3214.52px;top:523.10px;font-size:23.3px;line-height:23.3px;color:#3d92ea;">1</span>
<span class="t" id="t45" style="left:2763.60px;top:565.10px;font-size:23.3px;line-height:23.3px;color:#9a9a9a;letter-spacing:-0.814px;">Connect Each Island to</span>
<span class="t" id="t46" style="left:3093.60px;top:562.39px;font-size:23.3px;line-height:23.3px;color:#dedede;letter-spacing:-0.697px;">Nearest</span>
<span class="t" id="t47" style="left:2763.60px;top:607.20px;font-size:23.3px;line-height:23.3px;color:#9a9a9a;letter-spacing:-0.881px;">Mesh Expansion</span>
<span class="t" id="t48" style="left:3214.77px;top:607.20px;font-size:23.3px;line-height:23.3px;color:#3d92ea;">0</span>
<span class="t" id="t49" style="left:2727.30px;top:654.50px;font-size:23.3px;line-height:23.3px;color:#e2e2e2;letter-spacing:-0.752px;">Behaviors</span>
<span class="t" id="t50" style="left:2727.30px;top:708.50px;font-size:23.3px;line-height:23.3px;color:#dedede;letter-spacing:-0.146px;">Auto Blink</span>
<span class="t" id="t51" style="left:2727.30px;top:778.89px;font-size:23.3px;line-height:23.3px;color:#dedede;letter-spacing:-0.471px;">Body</span>
<span class="t" id="t52" style="left:2727.30px;top:848.79px;font-size:23.3px;line-height:23.3px;color:#dedede;letter-spacing:-0.963px;">Dragger</span>
<span class="t" id="t53" style="left:2727.30px;top:918.79px;font-size:23.3px;line-height:23.3px;color:#dedede;letter-spacing:-1.917px;">Eye Gaze</span>
<span class="t" id="t54" style="left:2727.30px;top:988.70px;font-size:23.3px;line-height:23.3px;color:#dedede;letter-spacing:-2.200px;">Face</span>
<span class="t" id="t55" style="left:2727.30px;top:1058.69px;font-size:23.3px;line-height:23.3px;color:#dedede;letter-spacing:-0.817px;">Handle Fixer</span>
<span class="t" id="t56" style="left:2727.30px;top:1128.99px;font-size:23.3px;line-height:23.3px;color:#dedede;letter-spacing:-0.647px;">Head &amp; Body Turner</span>
<span class="t" id="t57" style="left:2727.30px;top:1586.89px;font-size:23.3px;line-height:23.3px;color:#dedede;letter-spacing:-0.231px;">Limb IK</span>
<span class="t" id="t58" style="left:2727.30px;top:1657.29px;font-size:23.3px;line-height:23.3px;color:#dedede;letter-spacing:-0.852px;">Lip Sync</span>
<span class="t" id="t59" style="left:2727.30px;top:1727.49px;font-size:23.3px;line-height:23.3px;color:#dedede;letter-spacing:-1.028px;">Physics</span>
<span class="t" id="t60" style="left:2727.30px;top:1796.89px;font-size:23.3px;line-height:23.3px;color:#dedede;letter-spacing:-0.648px;">Transform</span>
<span class="t" id="t61" style="left:2727.30px;top:1867.39px;font-size:23.3px;line-height:23.3px;color:#dedede;letter-spacing:-0.783px;">Triggers</span>
<span class="t" id="t62" style="left:2761.10px;top:1174.89px;font-size:23.3px;line-height:23.3px;color:#dedede;letter-spacing:-0.290px;">Controlled by</span>
<span class="t" id="t63" style="left:3034.40px;top:1172.19px;font-size:23.3px;line-height:23.3px;color:#dedede;letter-spacing:-0.190px;">Body rotation</span>
<span class="t" id="t64" style="left:2761.10px;top:1217.49px;font-size:23.3px;line-height:23.3px;color:#9a9a9a;letter-spacing:-0.334px;">Left Profile</span>
<span class="t" id="t65" style="left:3219.27px;top:1217.49px;font-size:23.3px;line-height:23.3px;color:#9a9a9a;">1</span>
<span class="t" id="t66" style="left:2761.10px;top:1259.34px;font-size:23.3px;line-height:23.3px;color:#9a9a9a;letter-spacing:-0.365px;">Left Quarter</span>
<span class="t" id="t67" style="left:3219.27px;top:1259.34px;font-size:23.3px;line-height:23.3px;color:#9a9a9a;">1</span>
<span class="t" id="t68" style="left:2761.10px;top:1301.19px;font-size:23.3px;line-height:23.3px;color:#9a9a9a;letter-spacing:-0.203px;">Frontal</span>
<span class="t" id="t69" style="left:3219.27px;top:1301.19px;font-size:23.3px;line-height:23.3px;color:#9a9a9a;">1</span>
<span class="t" id="t70" style="left:2761.10px;top:1343.04px;font-size:23.3px;line-height:23.3px;color:#9a9a9a;letter-spacing:-0.412px;">Right Quarter</span>
<span class="t" id="t71" style="left:3219.27px;top:1343.04px;font-size:23.3px;line-height:23.3px;color:#9a9a9a;">1</span>
<span class="t" id="t72" style="left:2761.10px;top:1384.89px;font-size:23.3px;line-height:23.3px;color:#9a9a9a;letter-spacing:-0.409px;">Right Profile</span>
<span class="t" id="t73" style="left:3219.27px;top:1384.89px;font-size:23.3px;line-height:23.3px;color:#9a9a9a;">1</span>
<span class="t" id="t74" style="left:2761.10px;top:1426.74px;font-size:23.3px;line-height:23.3px;color:#9a9a9a;letter-spacing:-0.457px;">Upward</span>
<span class="t" id="t75" style="left:3219.02px;top:1426.74px;font-size:23.3px;line-height:23.3px;color:#9a9a9a;">0</span>
<span class="t" id="t76" style="left:2761.10px;top:1468.59px;font-size:23.3px;line-height:23.3px;color:#9a9a9a;letter-spacing:-0.181px;">Downward</span>
<span class="t" id="t77" style="left:3219.02px;top:1468.59px;font-size:23.3px;line-height:23.3px;color:#9a9a9a;">0</span>
<span class="t" id="t78" style="left:2760.60px;top:1510.79px;font-size:23.3px;line-height:23.3px;color:#dedede;letter-spacing:-0.158px;">Sensitivity</span>
<span class="t" id="t79" style="left:3176.60px;top:1510.79px;font-size:23.3px;line-height:23.3px;color:#3d92ea;letter-spacing:1.374px;">50</span>
<span class="t" id="t80" style="left:3207.89px;top:1510.79px;font-size:23.3px;line-height:23.3px;color:#9a9a9a;">%</span>
</body></html>
